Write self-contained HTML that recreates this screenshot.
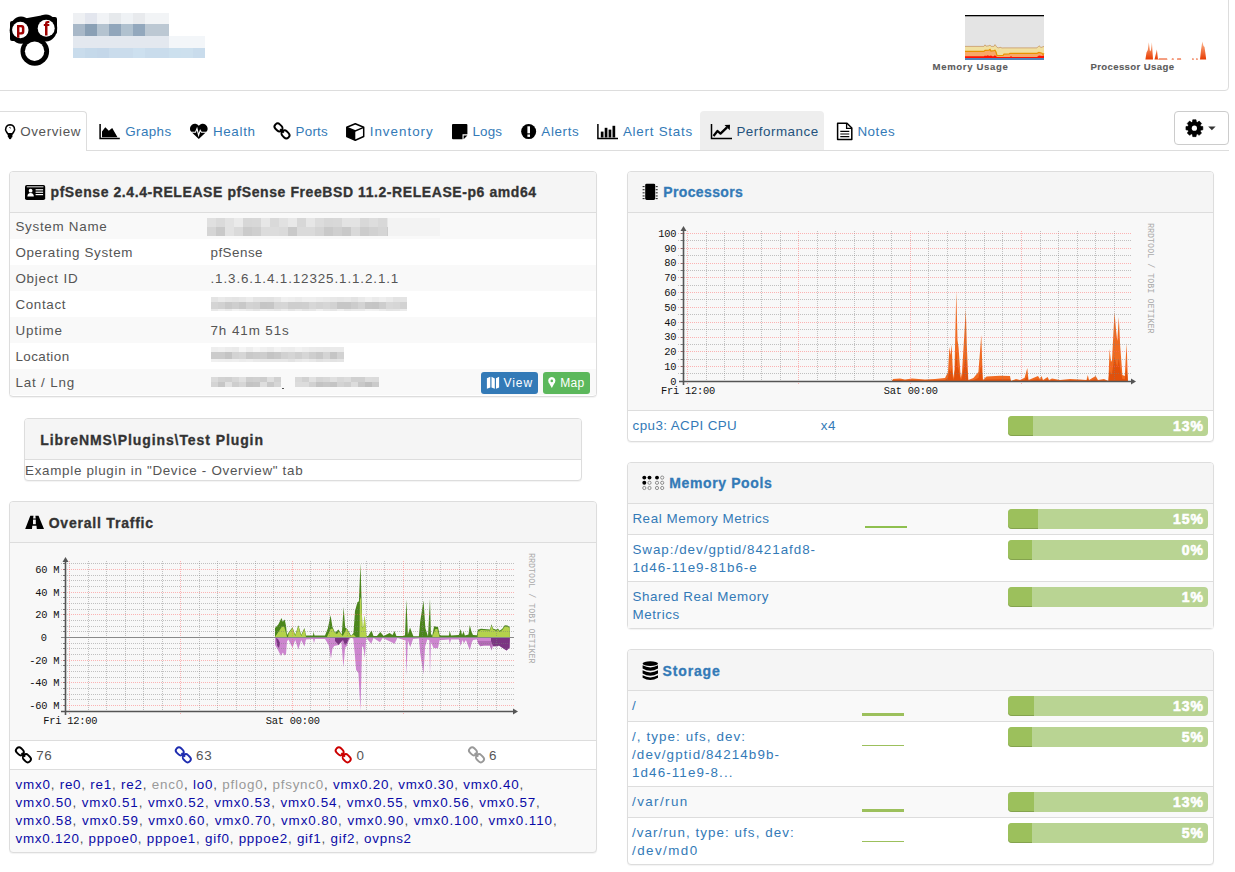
<!DOCTYPE html>
<html><head><meta charset="utf-8"><title>LibreNMS pfSense device</title>
<style>
html,body{margin:0;padding:0;background:#fff;width:1235px;height:872px;overflow:hidden;position:relative;font-family:"Liberation Sans",sans-serif;}
</style></head><body>
<div style="position:absolute;left:-6px;top:-6px;width:1235px;height:97px;box-sizing:border-box;border:1px solid #dddddd;border-radius:4px;background:#fff;"></div>
<div style="position:absolute;left:932.60px;top:62.27px;white-space:pre;font-family:'Liberation Sans', sans-serif;font-size:9.6px;line-height:9.6px;font-weight:700;color:#5b5b5b;letter-spacing:0.632px;-webkit-text-stroke:0.1px #5b5b5b">Memory Usage</div>
<div style="position:absolute;left:1090.40px;top:62.27px;white-space:pre;font-family:'Liberation Sans', sans-serif;font-size:9.6px;line-height:9.6px;font-weight:700;color:#5b5b5b;letter-spacing:0.372px;-webkit-text-stroke:0.1px #5b5b5b">Processor Usage</div>
<div style="position:absolute;left:0px;top:150px;width:1229px;height:1px;background:#dddddd;"></div>
<div style="position:absolute;left:-6px;top:111px;width:93px;height:40px;box-sizing:border-box;border:1px solid #dddddd;border-bottom:none;border-radius:4px 4px 0 0;background:#fff;"></div>
<div style="position:absolute;left:700px;top:111px;width:124px;height:39px;background:#eeeeee;border-radius:4px 4px 0 0;"></div>
<div style="position:absolute;left:1174px;top:111px;width:55px;height:34px;box-sizing:border-box;border:1px solid #cccccc;border-radius:4px;background:#fff;"></div>
<div style="position:absolute;left:20.20px;top:125.26px;white-space:pre;font-family:'Liberation Sans', sans-serif;font-size:13.4px;line-height:13.4px;font-weight:400;color:#555;letter-spacing:0.641px">Overview</div>
<div style="position:absolute;left:125.20px;top:125.26px;white-space:pre;font-family:'Liberation Sans', sans-serif;font-size:13.4px;line-height:13.4px;font-weight:400;color:#337ab7;letter-spacing:0.416px">Graphs</div>
<div style="position:absolute;left:212.90px;top:125.26px;white-space:pre;font-family:'Liberation Sans', sans-serif;font-size:13.4px;line-height:13.4px;font-weight:400;color:#337ab7;letter-spacing:0.676px">Health</div>
<div style="position:absolute;left:295.50px;top:125.26px;white-space:pre;font-family:'Liberation Sans', sans-serif;font-size:13.4px;line-height:13.4px;font-weight:400;color:#337ab7;letter-spacing:0.259px">Ports</div>
<div style="position:absolute;left:369.70px;top:125.26px;white-space:pre;font-family:'Liberation Sans', sans-serif;font-size:13.4px;line-height:13.4px;font-weight:400;color:#337ab7;letter-spacing:1.001px">Inventory</div>
<div style="position:absolute;left:472.50px;top:125.26px;white-space:pre;font-family:'Liberation Sans', sans-serif;font-size:13.4px;line-height:13.4px;font-weight:400;color:#337ab7;letter-spacing:0.151px">Logs</div>
<div style="position:absolute;left:541.30px;top:125.26px;white-space:pre;font-family:'Liberation Sans', sans-serif;font-size:13.4px;line-height:13.4px;font-weight:400;color:#337ab7;letter-spacing:0.653px">Alerts</div>
<div style="position:absolute;left:622.90px;top:125.26px;white-space:pre;font-family:'Liberation Sans', sans-serif;font-size:13.4px;line-height:13.4px;font-weight:400;color:#337ab7;letter-spacing:0.752px">Alert Stats</div>
<div style="position:absolute;left:736.40px;top:125.26px;white-space:pre;font-family:'Liberation Sans', sans-serif;font-size:13.4px;line-height:13.4px;font-weight:400;color:#23527c;letter-spacing:0.514px">Performance</div>
<div style="position:absolute;left:857.40px;top:125.26px;white-space:pre;font-family:'Liberation Sans', sans-serif;font-size:13.4px;line-height:13.4px;font-weight:400;color:#337ab7;letter-spacing:0.554px">Notes</div>
<div style="position:absolute;left:9px;top:171px;width:588px;height:226px;box-sizing:border-box;border:1px solid #dddddd;border-radius:4px;background:#fff;box-shadow:0 1px 1px rgba(0,0,0,.05);"></div>
<div style="position:absolute;left:10px;top:172px;width:586px;height:40px;background:#f5f5f5;border-radius:3px 3px 0 0;"></div>
<div style="position:absolute;left:10px;top:212px;width:586px;height:1px;background:#dddddd;"></div>
<div style="position:absolute;left:10px;top:213px;width:586px;height:26px;background:#f9f9f9;"></div>
<div style="position:absolute;left:10px;top:265px;width:586px;height:26px;background:#f9f9f9;"></div>
<div style="position:absolute;left:10px;top:317px;width:586px;height:26px;background:#f9f9f9;"></div>
<div style="position:absolute;left:10px;top:369px;width:586px;height:26px;background:#f9f9f9;"></div>
<div style="position:absolute;left:50.50px;top:184.95px;white-space:pre;font-family:'Liberation Sans', sans-serif;font-size:14px;line-height:14px;font-weight:700;color:#333333;letter-spacing:0.579px;-webkit-text-stroke:0.3px #333333">pfSense 2.4.4-RELEASE pfSense FreeBSD 11.2-RELEASE-p6 amd64</div>
<div style="position:absolute;left:15.40px;top:220.06px;white-space:pre;font-family:'Liberation Sans', sans-serif;font-size:13.4px;line-height:13.4px;font-weight:400;color:#555555;letter-spacing:0.731px">System Name</div>
<div style="position:absolute;left:15.40px;top:246.06px;white-space:pre;font-family:'Liberation Sans', sans-serif;font-size:13.4px;line-height:13.4px;font-weight:400;color:#555555;letter-spacing:0.655px">Operating System</div>
<div style="position:absolute;left:15.40px;top:272.06px;white-space:pre;font-family:'Liberation Sans', sans-serif;font-size:13.4px;line-height:13.4px;font-weight:400;color:#555555;letter-spacing:0.798px">Object ID</div>
<div style="position:absolute;left:15.40px;top:298.06px;white-space:pre;font-family:'Liberation Sans', sans-serif;font-size:13.4px;line-height:13.4px;font-weight:400;color:#555555;letter-spacing:0.657px">Contact</div>
<div style="position:absolute;left:15.40px;top:324.06px;white-space:pre;font-family:'Liberation Sans', sans-serif;font-size:13.4px;line-height:13.4px;font-weight:400;color:#555555;letter-spacing:0.836px">Uptime</div>
<div style="position:absolute;left:15.40px;top:350.06px;white-space:pre;font-family:'Liberation Sans', sans-serif;font-size:13.4px;line-height:13.4px;font-weight:400;color:#555555;letter-spacing:0.437px">Location</div>
<div style="position:absolute;left:15.40px;top:376.06px;white-space:pre;font-family:'Liberation Sans', sans-serif;font-size:13.4px;line-height:13.4px;font-weight:400;color:#555555;letter-spacing:0.834px">Lat / Lng</div>
<div style="position:absolute;left:210.50px;top:246.06px;white-space:pre;font-family:'Liberation Sans', sans-serif;font-size:13.4px;line-height:13.4px;font-weight:400;color:#555555;letter-spacing:0.477px">pfSense</div>
<div style="position:absolute;left:210.50px;top:272.06px;white-space:pre;font-family:'Liberation Sans', sans-serif;font-size:13.4px;line-height:13.4px;font-weight:400;color:#555555;letter-spacing:0.888px">.1.3.6.1.4.1.12325.1.1.2.1.1</div>
<div style="position:absolute;left:210.50px;top:324.06px;white-space:pre;font-family:'Liberation Sans', sans-serif;font-size:13.4px;line-height:13.4px;font-weight:400;color:#555555;letter-spacing:0.924px">7h 41m 51s</div>
<div style="position:absolute;left:481px;top:372px;width:57px;height:22px;background:#337ab7;border-radius:3px;"></div>
<div style="position:absolute;left:543px;top:372px;width:47px;height:22px;background:#5cb85c;border-radius:3px;"></div>
<div style="position:absolute;left:503.40px;top:376.74px;white-space:pre;font-family:'Liberation Sans', sans-serif;font-size:12px;line-height:12px;font-weight:400;color:#fff;letter-spacing:1.001px">View</div>
<div style="position:absolute;left:560.30px;top:376.74px;white-space:pre;font-family:'Liberation Sans', sans-serif;font-size:12px;line-height:12px;font-weight:400;color:#fff;letter-spacing:0.278px">Map</div>
<div style="position:absolute;left:24px;top:418px;width:558px;height:63px;box-sizing:border-box;border:1px solid #dddddd;border-radius:4px;background:#fff;box-shadow:0 1px 1px rgba(0,0,0,.05);"></div>
<div style="position:absolute;left:25px;top:419px;width:556px;height:40px;background:#f5f5f5;border-radius:3px 3px 0 0;"></div>
<div style="position:absolute;left:25px;top:459px;width:556px;height:1px;background:#dddddd;"></div>
<div style="position:absolute;left:40.20px;top:432.75px;white-space:pre;font-family:'Liberation Sans', sans-serif;font-size:14px;line-height:14px;font-weight:700;color:#333333;letter-spacing:0.915px;-webkit-text-stroke:0.3px #333333">LibreNMS\Plugins\Test Plugin</div>
<div style="position:absolute;left:25.10px;top:463.76px;white-space:pre;font-family:'Liberation Sans', sans-serif;font-size:13.4px;line-height:13.4px;font-weight:400;color:#555555;letter-spacing:0.690px">Example plugin in "Device - Overview" tab</div>
<div style="position:absolute;left:9px;top:501px;width:588px;height:352px;box-sizing:border-box;border:1px solid #dddddd;border-radius:4px;background:#f9f9f9;box-shadow:0 1px 1px rgba(0,0,0,.05);"></div>
<div style="position:absolute;left:10px;top:502px;width:586px;height:40px;background:#f5f5f5;border-radius:3px 3px 0 0;"></div>
<div style="position:absolute;left:10px;top:542px;width:586px;height:1px;background:#dddddd;"></div>
<div style="position:absolute;left:10px;top:543px;width:586px;height:197px;background:#f8f8f8;"></div>
<div style="position:absolute;left:10px;top:740px;width:586px;height:1px;background:#dddddd;"></div>
<div style="position:absolute;left:10px;top:741px;width:586px;height:28px;background:#fff;"></div>
<div style="position:absolute;left:10px;top:769px;width:586px;height:1px;background:#dddddd;"></div>
<div style="position:absolute;left:48.70px;top:515.65px;white-space:pre;font-family:'Liberation Sans', sans-serif;font-size:14px;line-height:14px;font-weight:700;color:#333333;letter-spacing:0.786px;-webkit-text-stroke:0.3px #333333">Overall Traffic</div>
<div style="position:absolute;left:36.30px;top:748.76px;white-space:pre;font-family:'Liberation Sans', sans-serif;font-size:13.4px;line-height:13.4px;font-weight:400;color:#555555;letter-spacing:0.600px">76</div>
<div style="position:absolute;left:196.10px;top:748.76px;white-space:pre;font-family:'Liberation Sans', sans-serif;font-size:13.4px;line-height:13.4px;font-weight:400;color:#555555;letter-spacing:0.750px">63</div>
<div style="position:absolute;left:356.50px;top:748.76px;white-space:pre;font-family:'Liberation Sans', sans-serif;font-size:13.4px;line-height:13.4px;font-weight:400;color:#555555;letter-spacing:0.750px">0</div>
<div style="position:absolute;left:489.10px;top:748.76px;white-space:pre;font-family:'Liberation Sans', sans-serif;font-size:13.4px;line-height:13.4px;font-weight:400;color:#555555;letter-spacing:0.750px">6</div>
<div style="position:absolute;left:15.50px;top:778.06px;white-space:pre;font-family:'Liberation Sans', sans-serif;font-size:13.4px;line-height:13.4px;font-weight:400;color:#555555;letter-spacing:0.783px"><span style="color:#0a0aa6">vmx0</span><span style="color:#555">, </span><span style="color:#0a0aa6">re0</span><span style="color:#555">, </span><span style="color:#0a0aa6">re1</span><span style="color:#555">, </span><span style="color:#0a0aa6">re2</span><span style="color:#555">, </span><span style="color:#999999">enc0</span><span style="color:#555">, </span><span style="color:#0a0aa6">lo0</span><span style="color:#555">, </span><span style="color:#999999">pflog0</span><span style="color:#555">, </span><span style="color:#999999">pfsync0</span><span style="color:#555">, </span><span style="color:#0a0aa6">vmx0.20</span><span style="color:#555">, </span><span style="color:#0a0aa6">vmx0.30</span><span style="color:#555">, </span><span style="color:#0a0aa6">vmx0.40</span><span style="color:#555">, </span></div>
<div style="position:absolute;left:15.50px;top:796.06px;white-space:pre;font-family:'Liberation Sans', sans-serif;font-size:13.4px;line-height:13.4px;font-weight:400;color:#555555;letter-spacing:0.907px"><span style="color:#0a0aa6">vmx0.50</span><span style="color:#555">, </span><span style="color:#0a0aa6">vmx0.51</span><span style="color:#555">, </span><span style="color:#0a0aa6">vmx0.52</span><span style="color:#555">, </span><span style="color:#0a0aa6">vmx0.53</span><span style="color:#555">, </span><span style="color:#0a0aa6">vmx0.54</span><span style="color:#555">, </span><span style="color:#0a0aa6">vmx0.55</span><span style="color:#555">, </span><span style="color:#0a0aa6">vmx0.56</span><span style="color:#555">, </span><span style="color:#0a0aa6">vmx0.57</span><span style="color:#555">, </span></div>
<div style="position:absolute;left:15.50px;top:813.86px;white-space:pre;font-family:'Liberation Sans', sans-serif;font-size:13.4px;line-height:13.4px;font-weight:400;color:#555555;letter-spacing:0.923px"><span style="color:#0a0aa6">vmx0.58</span><span style="color:#555">, </span><span style="color:#0a0aa6">vmx0.59</span><span style="color:#555">, </span><span style="color:#0a0aa6">vmx0.60</span><span style="color:#555">, </span><span style="color:#0a0aa6">vmx0.70</span><span style="color:#555">, </span><span style="color:#0a0aa6">vmx0.80</span><span style="color:#555">, </span><span style="color:#0a0aa6">vmx0.90</span><span style="color:#555">, </span><span style="color:#0a0aa6">vmx0.100</span><span style="color:#555">, </span><span style="color:#0a0aa6">vmx0.110</span><span style="color:#555">, </span></div>
<div style="position:absolute;left:15.50px;top:831.66px;white-space:pre;font-family:'Liberation Sans', sans-serif;font-size:13.4px;line-height:13.4px;font-weight:400;color:#555555;letter-spacing:0.759px"><span style="color:#0a0aa6">vmx0.120</span><span style="color:#555">, </span><span style="color:#0a0aa6">pppoe0</span><span style="color:#555">, </span><span style="color:#0a0aa6">pppoe1</span><span style="color:#555">, </span><span style="color:#0a0aa6">gif0</span><span style="color:#555">, </span><span style="color:#0a0aa6">pppoe2</span><span style="color:#555">, </span><span style="color:#0a0aa6">gif1</span><span style="color:#555">, </span><span style="color:#0a0aa6">gif2</span><span style="color:#555">, </span><span style="color:#0a0aa6">ovpns2</span></div>
<div style="position:absolute;left:627px;top:171px;width:587px;height:271px;box-sizing:border-box;border:1px solid #dddddd;border-radius:4px;background:#fff;box-shadow:0 1px 1px rgba(0,0,0,.05);"></div>
<div style="position:absolute;left:628px;top:172px;width:585px;height:40px;background:#f5f5f5;border-radius:3px 3px 0 0;"></div>
<div style="position:absolute;left:628px;top:212px;width:585px;height:1px;background:#dddddd;"></div>
<div style="position:absolute;left:628px;top:213px;width:585px;height:197px;background:#f8f8f8;"></div>
<div style="position:absolute;left:628px;top:410px;width:585px;height:1px;background:#dddddd;"></div>
<div style="position:absolute;left:663.20px;top:185.15px;white-space:pre;font-family:'Liberation Sans', sans-serif;font-size:14px;line-height:14px;font-weight:700;color:#337ab7;letter-spacing:0.380px;-webkit-text-stroke:0.3px #337ab7">Processors</div>
<div style="position:absolute;left:632.60px;top:418.66px;white-space:pre;font-family:'Liberation Sans', sans-serif;font-size:13.4px;line-height:13.4px;font-weight:400;color:#337ab7;letter-spacing:0.401px">cpu3: ACPI CPU</div>
<div style="position:absolute;left:820.70px;top:418.66px;white-space:pre;font-family:'Liberation Sans', sans-serif;font-size:13.4px;line-height:13.4px;font-weight:400;color:#337ab7;letter-spacing:0.600px">x4</div>
<div style="position:absolute;left:1008px;top:416px;width:200px;height:20px;background:#b9d493;border-radius:4px;overflow:hidden;"></div>
<div style="position:absolute;left:1008px;top:416px;width:25px;height:20px;background:#9cc05c;border-radius:4px 0 0 4px;box-shadow:inset 0 -1px 0 rgba(0,0,0,.15);"></div>
<div style="position:absolute;left:1172.97px;top:418.55px;white-space:pre;font-family:'Liberation Sans', sans-serif;font-size:14px;line-height:14px;font-weight:700;color:#fff;letter-spacing:1.000px;-webkit-text-stroke:0.6px #fff">13%</div>
<div style="position:absolute;left:627px;top:462px;width:587px;height:167px;box-sizing:border-box;border:1px solid #dddddd;border-radius:4px;background:#fff;box-shadow:0 1px 1px rgba(0,0,0,.05);"></div>
<div style="position:absolute;left:628px;top:463px;width:585px;height:40px;background:#f5f5f5;border-radius:3px 3px 0 0;"></div>
<div style="position:absolute;left:628px;top:503px;width:585px;height:1px;background:#dddddd;"></div>
<div style="position:absolute;left:628px;top:504px;width:585px;height:30px;background:#f9f9f9;"></div>
<div style="position:absolute;left:628px;top:534px;width:585px;height:1px;background:#dddddd;"></div>
<div style="position:absolute;left:628px;top:581px;width:585px;height:1px;background:#dddddd;"></div>
<div style="position:absolute;left:628px;top:582px;width:585px;height:46px;background:#f9f9f9;"></div>
<div style="position:absolute;left:669.20px;top:476.45px;white-space:pre;font-family:'Liberation Sans', sans-serif;font-size:14px;line-height:14px;font-weight:700;color:#337ab7;letter-spacing:0.627px;-webkit-text-stroke:0.3px #337ab7">Memory Pools</div>
<div style="position:absolute;left:632.40px;top:511.96px;white-space:pre;font-family:'Liberation Sans', sans-serif;font-size:13.4px;line-height:13.4px;font-weight:400;color:#337ab7;letter-spacing:0.561px">Real Memory Metrics</div>
<div style="position:absolute;left:632.40px;top:542.96px;white-space:pre;font-family:'Liberation Sans', sans-serif;font-size:13.4px;line-height:13.4px;font-weight:400;color:#337ab7;letter-spacing:0.974px">Swap:/dev/gptid/8421afd8-</div>
<div style="position:absolute;left:632.40px;top:561.46px;white-space:pre;font-family:'Liberation Sans', sans-serif;font-size:13.4px;line-height:13.4px;font-weight:400;color:#337ab7;letter-spacing:1.013px">1d46-11e9-81b6-e</div>
<div style="position:absolute;left:632.40px;top:589.66px;white-space:pre;font-family:'Liberation Sans', sans-serif;font-size:13.4px;line-height:13.4px;font-weight:400;color:#337ab7;letter-spacing:0.563px">Shared Real Memory</div>
<div style="position:absolute;left:632.40px;top:607.66px;white-space:pre;font-family:'Liberation Sans', sans-serif;font-size:13.4px;line-height:13.4px;font-weight:400;color:#337ab7;letter-spacing:0.624px">Metrics</div>
<div style="position:absolute;left:1008px;top:509px;width:200px;height:20px;background:#b9d493;border-radius:4px;overflow:hidden;"></div>
<div style="position:absolute;left:1008px;top:509px;width:30px;height:20px;background:#9cc05c;border-radius:4px 0 0 4px;box-shadow:inset 0 -1px 0 rgba(0,0,0,.15);"></div>
<div style="position:absolute;left:1172.97px;top:511.55px;white-space:pre;font-family:'Liberation Sans', sans-serif;font-size:14px;line-height:14px;font-weight:700;color:#fff;letter-spacing:1.000px;-webkit-text-stroke:0.6px #fff">15%</div>
<div style="position:absolute;left:1008px;top:540px;width:200px;height:20px;background:#b9d493;border-radius:4px;overflow:hidden;"></div>
<div style="position:absolute;left:1008px;top:540px;width:24px;height:20px;background:#9cc05c;border-radius:4px 0 0 4px;box-shadow:inset 0 -1px 0 rgba(0,0,0,.15);"></div>
<div style="position:absolute;left:1181.77px;top:542.55px;white-space:pre;font-family:'Liberation Sans', sans-serif;font-size:14px;line-height:14px;font-weight:700;color:#fff;letter-spacing:1.000px;-webkit-text-stroke:0.6px #fff">0%</div>
<div style="position:absolute;left:1008px;top:587px;width:200px;height:20px;background:#b9d493;border-radius:4px;overflow:hidden;"></div>
<div style="position:absolute;left:1008px;top:587px;width:24px;height:20px;background:#9cc05c;border-radius:4px 0 0 4px;box-shadow:inset 0 -1px 0 rgba(0,0,0,.15);"></div>
<div style="position:absolute;left:1181.77px;top:589.55px;white-space:pre;font-family:'Liberation Sans', sans-serif;font-size:14px;line-height:14px;font-weight:700;color:#fff;letter-spacing:1.000px;-webkit-text-stroke:0.6px #fff">1%</div>
<div style="position:absolute;left:865px;top:526px;width:42px;height:2px;background:#8fc04f;"></div>
<div style="position:absolute;left:627px;top:649px;width:587px;height:216px;box-sizing:border-box;border:1px solid #dddddd;border-radius:4px;background:#fff;box-shadow:0 1px 1px rgba(0,0,0,.05);"></div>
<div style="position:absolute;left:628px;top:650px;width:585px;height:40px;background:#f5f5f5;border-radius:3px 3px 0 0;"></div>
<div style="position:absolute;left:628px;top:690px;width:585px;height:1px;background:#dddddd;"></div>
<div style="position:absolute;left:628px;top:691px;width:585px;height:30px;background:#f9f9f9;"></div>
<div style="position:absolute;left:628px;top:721px;width:585px;height:1px;background:#dddddd;"></div>
<div style="position:absolute;left:628px;top:786px;width:585px;height:1px;background:#dddddd;"></div>
<div style="position:absolute;left:628px;top:787px;width:585px;height:30px;background:#f9f9f9;"></div>
<div style="position:absolute;left:628px;top:817px;width:585px;height:1px;background:#dddddd;"></div>
<div style="position:absolute;left:662.60px;top:663.55px;white-space:pre;font-family:'Liberation Sans', sans-serif;font-size:14px;line-height:14px;font-weight:700;color:#337ab7;letter-spacing:0.846px;-webkit-text-stroke:0.3px #337ab7">Storage</div>
<div style="position:absolute;left:632.00px;top:699.16px;white-space:pre;font-family:'Liberation Sans', sans-serif;font-size:13.4px;line-height:13.4px;font-weight:400;color:#337ab7;letter-spacing:0.750px">/</div>
<div style="position:absolute;left:632.00px;top:729.66px;white-space:pre;font-family:'Liberation Sans', sans-serif;font-size:13.4px;line-height:13.4px;font-weight:400;color:#337ab7;letter-spacing:1.086px">/, type: ufs, dev:</div>
<div style="position:absolute;left:632.00px;top:748.06px;white-space:pre;font-family:'Liberation Sans', sans-serif;font-size:13.4px;line-height:13.4px;font-weight:400;color:#337ab7;letter-spacing:1.114px">/dev/gptid/84214b9b-</div>
<div style="position:absolute;left:632.00px;top:766.06px;white-space:pre;font-family:'Liberation Sans', sans-serif;font-size:13.4px;line-height:13.4px;font-weight:400;color:#337ab7;letter-spacing:1.106px">1d46-11e9-8...</div>
<div style="position:absolute;left:632.00px;top:794.86px;white-space:pre;font-family:'Liberation Sans', sans-serif;font-size:13.4px;line-height:13.4px;font-weight:400;color:#337ab7;letter-spacing:1.413px">/var/run</div>
<div style="position:absolute;left:632.00px;top:826.16px;white-space:pre;font-family:'Liberation Sans', sans-serif;font-size:13.4px;line-height:13.4px;font-weight:400;color:#337ab7;letter-spacing:1.062px">/var/run, type: ufs, dev:</div>
<div style="position:absolute;left:632.00px;top:843.76px;white-space:pre;font-family:'Liberation Sans', sans-serif;font-size:13.4px;line-height:13.4px;font-weight:400;color:#337ab7;letter-spacing:1.429px">/dev/md0</div>
<div style="position:absolute;left:1008px;top:696px;width:200px;height:20px;background:#b9d493;border-radius:4px;overflow:hidden;"></div>
<div style="position:absolute;left:1008px;top:696px;width:26px;height:20px;background:#9cc05c;border-radius:4px 0 0 4px;box-shadow:inset 0 -1px 0 rgba(0,0,0,.15);"></div>
<div style="position:absolute;left:1172.97px;top:698.55px;white-space:pre;font-family:'Liberation Sans', sans-serif;font-size:14px;line-height:14px;font-weight:700;color:#fff;letter-spacing:1.000px;-webkit-text-stroke:0.6px #fff">13%</div>
<div style="position:absolute;left:1008px;top:727px;width:200px;height:20px;background:#b9d493;border-radius:4px;overflow:hidden;"></div>
<div style="position:absolute;left:1008px;top:727px;width:24px;height:20px;background:#9cc05c;border-radius:4px 0 0 4px;box-shadow:inset 0 -1px 0 rgba(0,0,0,.15);"></div>
<div style="position:absolute;left:1181.77px;top:729.55px;white-space:pre;font-family:'Liberation Sans', sans-serif;font-size:14px;line-height:14px;font-weight:700;color:#fff;letter-spacing:1.000px;-webkit-text-stroke:0.6px #fff">5%</div>
<div style="position:absolute;left:1008px;top:792px;width:200px;height:20px;background:#b9d493;border-radius:4px;overflow:hidden;"></div>
<div style="position:absolute;left:1008px;top:792px;width:26px;height:20px;background:#9cc05c;border-radius:4px 0 0 4px;box-shadow:inset 0 -1px 0 rgba(0,0,0,.15);"></div>
<div style="position:absolute;left:1172.97px;top:794.55px;white-space:pre;font-family:'Liberation Sans', sans-serif;font-size:14px;line-height:14px;font-weight:700;color:#fff;letter-spacing:1.000px;-webkit-text-stroke:0.6px #fff">13%</div>
<div style="position:absolute;left:1008px;top:823px;width:200px;height:20px;background:#b9d493;border-radius:4px;overflow:hidden;"></div>
<div style="position:absolute;left:1008px;top:823px;width:24px;height:20px;background:#9cc05c;border-radius:4px 0 0 4px;box-shadow:inset 0 -1px 0 rgba(0,0,0,.15);"></div>
<div style="position:absolute;left:1181.77px;top:825.55px;white-space:pre;font-family:'Liberation Sans', sans-serif;font-size:14px;line-height:14px;font-weight:700;color:#fff;letter-spacing:1.000px;-webkit-text-stroke:0.6px #fff">5%</div>
<div style="position:absolute;left:862px;top:713px;width:42px;height:3px;background:#9cc05c;"></div>
<div style="position:absolute;left:862px;top:745px;width:42px;height:1px;background:#9cc05c;"></div>
<div style="position:absolute;left:862px;top:809px;width:42px;height:3px;background:#9cc05c;"></div>
<div style="position:absolute;left:862px;top:841px;width:42px;height:1px;background:#9cc05c;"></div>
<svg style="position:absolute;left:0;top:0" width="1235" height="872" shape-rendering="crispEdges"><line x1="681" y1="381.5" x2="684" y2="381.5" stroke="#777"/><line x1="681" y1="366.5" x2="684" y2="366.5" stroke="#777"/><line x1="681" y1="351.5" x2="684" y2="351.5" stroke="#777"/><line x1="681" y1="337.5" x2="684" y2="337.5" stroke="#777"/><line x1="681" y1="322.5" x2="684" y2="322.5" stroke="#777"/><line x1="681" y1="307.5" x2="684" y2="307.5" stroke="#777"/><line x1="681" y1="292.5" x2="684" y2="292.5" stroke="#777"/><line x1="681" y1="277.5" x2="684" y2="277.5" stroke="#777"/><line x1="681" y1="263.5" x2="684" y2="263.5" stroke="#777"/><line x1="681" y1="248.5" x2="684" y2="248.5" stroke="#777"/><line x1="681" y1="233.5" x2="684" y2="233.5" stroke="#777"/><line x1="681" y1="373.5" x2="684" y2="373.5" stroke="#777"/><line x1="681" y1="359.5" x2="684" y2="359.5" stroke="#777"/><line x1="681" y1="344.5" x2="684" y2="344.5" stroke="#777"/><line x1="681" y1="329.5" x2="684" y2="329.5" stroke="#777"/><line x1="681" y1="314.5" x2="684" y2="314.5" stroke="#777"/><line x1="681" y1="299.5" x2="684" y2="299.5" stroke="#777"/><line x1="681" y1="285.5" x2="684" y2="285.5" stroke="#777"/><line x1="681" y1="270.5" x2="684" y2="270.5" stroke="#777"/><line x1="681" y1="255.5" x2="684" y2="255.5" stroke="#777"/><line x1="681" y1="240.5" x2="684" y2="240.5" stroke="#777"/><polygon points="892.0,381.0 892.0,381.0 893.0,379.0 900.0,378.5 905.0,379.5 912.0,378.5 925.0,379.5 935.0,379.0 945.0,378.0 948.0,372.0 949.4,347.0 950.5,355.0 951.6,344.4 953.2,378.0 954.5,370.0 956.3,291.0 957.5,340.0 958.5,347.0 960.8,378.0 962.0,372.0 964.3,335.0 965.8,309.0 966.8,345.0 968.3,380.0 973.4,378.0 978.4,372.0 981.3,335.0 982.8,380.0 986.6,376.5 1000.0,375.8 1010.0,375.9 1011.0,381.0 1016.0,379.0 1020.0,380.0 1024.6,377.7 1027.3,368.0 1028.5,380.0 1038.0,376.0 1040.0,379.0 1041.6,376.0 1043.0,380.0 1047.7,377.0 1049.0,380.0 1052.0,378.5 1060.0,380.0 1070.0,379.0 1080.0,379.5 1086.5,380.0 1087.8,375.0 1089.0,380.0 1095.7,376.0 1098.0,380.0 1104.0,379.0 1108.4,381.0 1109.6,349.0 1111.0,362.0 1112.0,360.0 1114.5,312.0 1116.0,330.0 1117.3,341.0 1118.8,317.0 1120.2,346.0 1122.4,375.0 1124.8,376.0 1126.6,343.0 1127.9,381.0 1127.9,381.0" fill="#f06a20" shape-rendering="auto" /><polygon points="892.0,381.0 892.0,381.0 893.0,380.3 900.0,380.1 905.0,380.5 912.0,380.1 925.0,380.5 935.0,380.3 945.0,379.9 948.0,377.9 949.4,369.1 950.5,371.9 951.6,368.2 953.2,379.9 954.5,377.1 956.3,349.5 957.5,366.6 958.5,369.1 960.8,379.9 962.0,377.9 964.3,364.9 965.8,355.8 966.8,368.4 968.3,380.6 973.4,379.9 978.4,377.9 981.3,364.9 982.8,380.6 986.6,379.4 1000.0,379.2 1010.0,379.2 1011.0,381.0 1016.0,380.3 1020.0,380.6 1024.6,379.8 1027.3,376.4 1028.5,380.6 1038.0,379.2 1040.0,380.3 1041.6,379.2 1043.0,380.6 1047.7,379.6 1049.0,380.6 1052.0,380.1 1060.0,380.6 1070.0,380.3 1080.0,380.5 1086.5,380.6 1087.8,378.9 1089.0,380.6 1095.7,379.2 1098.0,380.6 1104.0,380.3 1108.4,381.0 1109.6,369.8 1111.0,374.4 1112.0,373.6 1114.5,356.9 1116.0,363.1 1117.3,367.0 1118.8,358.6 1120.2,368.8 1122.4,378.9 1124.8,379.2 1126.6,367.7 1127.9,381.0 1127.9,381.0" fill="#e2500a" shape-rendering="auto" /><line x1="678" y1="373.5" x2="1132" y2="373.5" stroke="rgba(125,125,125,.45)" stroke-dasharray="1 1"/><line x1="678" y1="359.5" x2="1132" y2="359.5" stroke="rgba(125,125,125,.45)" stroke-dasharray="1 1"/><line x1="678" y1="344.5" x2="1132" y2="344.5" stroke="rgba(125,125,125,.45)" stroke-dasharray="1 1"/><line x1="678" y1="329.5" x2="1132" y2="329.5" stroke="rgba(125,125,125,.45)" stroke-dasharray="1 1"/><line x1="678" y1="314.5" x2="1132" y2="314.5" stroke="rgba(125,125,125,.45)" stroke-dasharray="1 1"/><line x1="678" y1="299.5" x2="1132" y2="299.5" stroke="rgba(125,125,125,.45)" stroke-dasharray="1 1"/><line x1="678" y1="285.5" x2="1132" y2="285.5" stroke="rgba(125,125,125,.45)" stroke-dasharray="1 1"/><line x1="678" y1="270.5" x2="1132" y2="270.5" stroke="rgba(125,125,125,.45)" stroke-dasharray="1 1"/><line x1="678" y1="255.5" x2="1132" y2="255.5" stroke="rgba(125,125,125,.45)" stroke-dasharray="1 1"/><line x1="678" y1="240.5" x2="1132" y2="240.5" stroke="rgba(125,125,125,.45)" stroke-dasharray="1 1"/><line x1="706.5" y1="231" x2="706.5" y2="381" stroke="rgba(125,125,125,.45)" stroke-dasharray="1 1"/><line x1="724.5" y1="231" x2="724.5" y2="381" stroke="rgba(125,125,125,.45)" stroke-dasharray="1 1"/><line x1="743.5" y1="231" x2="743.5" y2="381" stroke="rgba(125,125,125,.45)" stroke-dasharray="1 1"/><line x1="761.5" y1="231" x2="761.5" y2="381" stroke="rgba(125,125,125,.45)" stroke-dasharray="1 1"/><line x1="780.5" y1="231" x2="780.5" y2="381" stroke="rgba(125,125,125,.45)" stroke-dasharray="1 1"/><line x1="817.5" y1="231" x2="817.5" y2="381" stroke="rgba(125,125,125,.45)" stroke-dasharray="1 1"/><line x1="835.5" y1="231" x2="835.5" y2="381" stroke="rgba(125,125,125,.45)" stroke-dasharray="1 1"/><line x1="854.5" y1="231" x2="854.5" y2="381" stroke="rgba(125,125,125,.45)" stroke-dasharray="1 1"/><line x1="873.5" y1="231" x2="873.5" y2="381" stroke="rgba(125,125,125,.45)" stroke-dasharray="1 1"/><line x1="891.5" y1="231" x2="891.5" y2="381" stroke="rgba(125,125,125,.45)" stroke-dasharray="1 1"/><line x1="928.5" y1="231" x2="928.5" y2="381" stroke="rgba(125,125,125,.45)" stroke-dasharray="1 1"/><line x1="947.5" y1="231" x2="947.5" y2="381" stroke="rgba(125,125,125,.45)" stroke-dasharray="1 1"/><line x1="965.5" y1="231" x2="965.5" y2="381" stroke="rgba(125,125,125,.45)" stroke-dasharray="1 1"/><line x1="984.5" y1="231" x2="984.5" y2="381" stroke="rgba(125,125,125,.45)" stroke-dasharray="1 1"/><line x1="1002.5" y1="231" x2="1002.5" y2="381" stroke="rgba(125,125,125,.45)" stroke-dasharray="1 1"/><line x1="1040.5" y1="231" x2="1040.5" y2="381" stroke="rgba(125,125,125,.45)" stroke-dasharray="1 1"/><line x1="1058.5" y1="231" x2="1058.5" y2="381" stroke="rgba(125,125,125,.45)" stroke-dasharray="1 1"/><line x1="1077.5" y1="231" x2="1077.5" y2="381" stroke="rgba(125,125,125,.45)" stroke-dasharray="1 1"/><line x1="1095.5" y1="231" x2="1095.5" y2="381" stroke="rgba(125,125,125,.45)" stroke-dasharray="1 1"/><line x1="1114.5" y1="231" x2="1114.5" y2="381" stroke="rgba(125,125,125,.45)" stroke-dasharray="1 1"/><line x1="678" y1="366.5" x2="1132" y2="366.5" stroke="rgba(255,95,95,.45)" stroke-dasharray="1 1"/><line x1="678" y1="351.5" x2="1132" y2="351.5" stroke="rgba(255,95,95,.45)" stroke-dasharray="1 1"/><line x1="678" y1="337.5" x2="1132" y2="337.5" stroke="rgba(255,95,95,.45)" stroke-dasharray="1 1"/><line x1="678" y1="322.5" x2="1132" y2="322.5" stroke="rgba(255,95,95,.45)" stroke-dasharray="1 1"/><line x1="678" y1="307.5" x2="1132" y2="307.5" stroke="rgba(255,95,95,.45)" stroke-dasharray="1 1"/><line x1="678" y1="292.5" x2="1132" y2="292.5" stroke="rgba(255,95,95,.45)" stroke-dasharray="1 1"/><line x1="678" y1="277.5" x2="1132" y2="277.5" stroke="rgba(255,95,95,.45)" stroke-dasharray="1 1"/><line x1="678" y1="263.5" x2="1132" y2="263.5" stroke="rgba(255,95,95,.45)" stroke-dasharray="1 1"/><line x1="678" y1="248.5" x2="1132" y2="248.5" stroke="rgba(255,95,95,.45)" stroke-dasharray="1 1"/><line x1="678" y1="233.5" x2="1132" y2="233.5" stroke="rgba(255,95,95,.45)" stroke-dasharray="1 1"/><line x1="687.5" y1="231" x2="687.5" y2="384" stroke="rgba(255,95,95,.45)" stroke-dasharray="1 1"/><line x1="798.5" y1="231" x2="798.5" y2="384" stroke="rgba(255,95,95,.45)" stroke-dasharray="1 1"/><line x1="910.5" y1="231" x2="910.5" y2="384" stroke="rgba(255,95,95,.45)" stroke-dasharray="1 1"/><line x1="1021.5" y1="231" x2="1021.5" y2="384" stroke="rgba(255,95,95,.45)" stroke-dasharray="1 1"/><line x1="683.5" y1="230" x2="683.5" y2="385" stroke="#555" stroke-width="1.6" shape-rendering="auto"/><polygon points="680.5,231 683.5,226 686.5,231" fill="#555" shape-rendering="auto"/><line x1="679" y1="381.5" x2="1132" y2="381.5" stroke="#555" stroke-width="1.6" shape-rendering="auto"/><polygon points="1131,378.5 1136,381.5 1131,384.5" fill="#555" shape-rendering="auto"/></svg>
<div style="position:absolute;left:670.25px;top:376.83px;white-space:pre;font-family:'Liberation Mono', monospace;font-size:10.4px;line-height:10.4px;font-weight:400;color:#111;letter-spacing:-0.250px">0</div>
<div style="position:absolute;left:664.27px;top:362.03px;white-space:pre;font-family:'Liberation Mono', monospace;font-size:10.4px;line-height:10.4px;font-weight:400;color:#111;letter-spacing:-0.250px">10</div>
<div style="position:absolute;left:664.27px;top:347.23px;white-space:pre;font-family:'Liberation Mono', monospace;font-size:10.4px;line-height:10.4px;font-weight:400;color:#111;letter-spacing:-0.250px">20</div>
<div style="position:absolute;left:664.27px;top:332.43px;white-space:pre;font-family:'Liberation Mono', monospace;font-size:10.4px;line-height:10.4px;font-weight:400;color:#111;letter-spacing:-0.250px">30</div>
<div style="position:absolute;left:664.27px;top:317.63px;white-space:pre;font-family:'Liberation Mono', monospace;font-size:10.4px;line-height:10.4px;font-weight:400;color:#111;letter-spacing:-0.250px">40</div>
<div style="position:absolute;left:664.27px;top:302.83px;white-space:pre;font-family:'Liberation Mono', monospace;font-size:10.4px;line-height:10.4px;font-weight:400;color:#111;letter-spacing:-0.250px">50</div>
<div style="position:absolute;left:664.27px;top:288.03px;white-space:pre;font-family:'Liberation Mono', monospace;font-size:10.4px;line-height:10.4px;font-weight:400;color:#111;letter-spacing:-0.250px">60</div>
<div style="position:absolute;left:664.27px;top:273.23px;white-space:pre;font-family:'Liberation Mono', monospace;font-size:10.4px;line-height:10.4px;font-weight:400;color:#111;letter-spacing:-0.250px">70</div>
<div style="position:absolute;left:664.27px;top:258.43px;white-space:pre;font-family:'Liberation Mono', monospace;font-size:10.4px;line-height:10.4px;font-weight:400;color:#111;letter-spacing:-0.250px">80</div>
<div style="position:absolute;left:664.27px;top:243.63px;white-space:pre;font-family:'Liberation Mono', monospace;font-size:10.4px;line-height:10.4px;font-weight:400;color:#111;letter-spacing:-0.250px">90</div>
<div style="position:absolute;left:658.28px;top:228.83px;white-space:pre;font-family:'Liberation Mono', monospace;font-size:10.4px;line-height:10.4px;font-weight:400;color:#111;letter-spacing:-0.250px">100</div>
<div style="position:absolute;left:661.06px;top:386.13px;white-space:pre;font-family:'Liberation Mono', monospace;font-size:10.4px;line-height:10.4px;font-weight:400;color:#111;letter-spacing:-0.250px">Fri 12:00</div>
<div style="position:absolute;left:883.76px;top:386.13px;white-space:pre;font-family:'Liberation Mono', monospace;font-size:10.4px;line-height:10.4px;font-weight:400;color:#111;letter-spacing:-0.250px">Sat 00:00</div>
<div style="position:absolute;left:1145px;top:223px;width:10px;height:112px;overflow:visible"><div style="position:absolute;left:9px;top:0;transform-origin:0 0;transform:rotate(90deg);white-space:pre;font-family:'Liberation Mono',monospace;font-size:8.4px;line-height:9px;color:#aaa;">RRDTOOL / TOBI OETIKER</div></div>
<svg style="position:absolute;left:0;top:0" width="1235" height="872" shape-rendering="crispEdges"><line x1="63" y1="569.5" x2="66" y2="569.5" stroke="#777"/><line x1="63" y1="592.5" x2="66" y2="592.5" stroke="#777"/><line x1="63" y1="614.5" x2="66" y2="614.5" stroke="#777"/><line x1="63" y1="660.5" x2="66" y2="660.5" stroke="#777"/><line x1="63" y1="682.5" x2="66" y2="682.5" stroke="#777"/><line x1="63" y1="705.5" x2="66" y2="705.5" stroke="#777"/><line x1="63" y1="699.5" x2="66" y2="699.5" stroke="#777"/><line x1="63" y1="694.5" x2="66" y2="694.5" stroke="#777"/><line x1="63" y1="688.5" x2="66" y2="688.5" stroke="#777"/><line x1="63" y1="677.5" x2="66" y2="677.5" stroke="#777"/><line x1="63" y1="671.5" x2="66" y2="671.5" stroke="#777"/><line x1="63" y1="665.5" x2="66" y2="665.5" stroke="#777"/><line x1="63" y1="654.5" x2="66" y2="654.5" stroke="#777"/><line x1="63" y1="648.5" x2="66" y2="648.5" stroke="#777"/><line x1="63" y1="643.5" x2="66" y2="643.5" stroke="#777"/><line x1="63" y1="631.5" x2="66" y2="631.5" stroke="#777"/><line x1="63" y1="626.5" x2="66" y2="626.5" stroke="#777"/><line x1="63" y1="620.5" x2="66" y2="620.5" stroke="#777"/><line x1="63" y1="609.5" x2="66" y2="609.5" stroke="#777"/><line x1="63" y1="603.5" x2="66" y2="603.5" stroke="#777"/><line x1="63" y1="597.5" x2="66" y2="597.5" stroke="#777"/><line x1="63" y1="586.5" x2="66" y2="586.5" stroke="#777"/><line x1="63" y1="580.5" x2="66" y2="580.5" stroke="#777"/><line x1="63" y1="575.5" x2="66" y2="575.5" stroke="#777"/><line x1="63" y1="563.5" x2="66" y2="563.5" stroke="#777"/><line x1="61" y1="637.5" x2="514" y2="637.5" stroke="#888"/><polygon points="275.0,637.0 275.0,628.0 278.3,624.4 281.5,618.0 282.8,621.7 284.7,619.4 286.0,625.8 287.0,635.0 288.8,632.2 292.5,627.2 295.2,635.0 298.4,625.3 301.2,635.0 304.4,628.0 306.0,635.5 313.0,635.4 313.6,631.7 314.5,635.4 325.0,635.4 327.8,628.5 330.6,615.2 332.4,626.7 335.1,632.7 338.4,629.6 341.8,634.4 343.6,607.1 345.2,627.6 347.2,629.0 349.6,633.0 351.1,635.9 353.5,633.0 355.0,611.0 357.4,602.3 358.9,601.3 360.5,563.3 362.3,627.1 364.2,627.1 364.7,615.4 365.5,627.0 366.2,636.0 368.1,636.0 371.5,630.5 373.5,636.0 376.9,636.0 380.3,632.0 383.7,636.0 389.6,633.0 392.5,635.0 394.5,631.0 396.4,636.0 403.2,636.0 405.0,635.3 406.4,599.4 407.9,634.7 410.0,627.6 411.5,631.5 413.4,636.3 418.9,636.3 420.2,621.4 423.5,600.4 425.4,628.2 428.0,636.3 430.0,598.4 430.9,633.4 432.2,636.0 434.1,626.3 438.0,626.9 439.6,634.7 441.3,635.5 449.0,635.5 449.7,630.8 451.0,635.5 458.8,635.0 460.7,628.9 462.0,635.0 463.6,631.5 464.9,635.5 468.5,634.4 469.8,625.0 471.4,631.5 473.0,635.0 476.9,635.3 477.9,629.8 481.0,628.7 490.0,629.4 491.5,624.3 493.0,628.4 496.2,629.8 497.9,628.4 499.6,630.8 502.3,628.7 504.8,625.3 507.5,625.6 509.6,627.0 509.9,637.0" fill="#4b861c" shape-rendering="auto" /><path d="M275.0,637.0 L276.4,635.0 L281.9,626.7 L284.2,626.7 L286.5,635.0 L287.0,637.0Z M288.0,637.0 L288.8,633.0 L292.5,628.0 L295.2,636.0 L298.4,626.3 L301.2,636.0 L304.4,629.0 L306.0,637.0Z M327.0,637.0 L330.6,629.0 L332.4,628.5 L335.0,633.0 L337.0,634.0 L338.9,631.5 L342.8,636.0 L346.7,628.6 L350.6,636.0 L353.5,634.4 L356.0,637.0Z M359.5,637.0 L359.9,599.8 L360.8,597.0 L362.8,629.0 L364.7,615.4 L366.7,636.0 L367.0,637.0Z M432.2,637.0 L435.4,628.9 L437.4,628.9 L439.3,636.0 L439.5,637.0Z M477.5,637.0 L478.2,631.5 L481.0,630.0 L490.0,630.5 L491.5,625.5 L493.0,629.5 L496.2,631.0 L497.9,629.5 L499.6,632.0 L502.3,630.0 L504.8,626.5 L507.5,626.8 L509.6,628.0 L509.9,637.0Z" fill="#b4d24c" shape-rendering="auto"/><polygon points="275.0,637.0 275.0,645.0 277.3,648.7 281.0,656.0 282.8,652.4 284.7,655.6 286.0,654.2 287.0,641.4 288.3,639.5 292.5,647.8 295.2,640.0 298.4,649.6 301.2,640.0 304.4,646.4 306.0,639.5 313.0,639.0 314.0,643.2 315.0,639.0 325.0,639.0 328.7,645.0 331.0,658.8 332.4,648.7 334.2,646.0 338.7,645.0 341.4,641.4 343.4,667.6 345.1,647.8 346.9,646.0 348.8,640.5 351.0,637.5 353.3,638.7 354.7,653.3 356.1,669.9 358.4,673.0 360.5,711.1 362.1,646.0 363.4,647.8 364.8,657.9 366.2,638.0 371.2,643.7 373.5,638.0 380.0,642.3 382.7,638.0 390.0,641.4 394.6,643.7 397.4,638.0 405.6,640.5 406.4,675.5 407.9,640.2 410.2,647.3 411.5,643.4 413.1,638.9 418.9,638.5 420.2,653.1 423.5,674.5 425.1,646.7 427.3,639.5 429.3,640.2 430.0,675.8 430.9,642.1 433.5,648.0 438.0,648.3 439.6,640.2 449.0,639.5 449.7,644.1 451.0,639.5 458.8,639.5 460.7,646.0 462.6,640.0 463.9,643.4 465.9,640.0 469.8,650.2 471.7,642.8 473.0,640.0 476.9,639.4 477.9,643.5 480.3,646.3 483.8,645.6 490.0,645.6 491.5,650.4 493.0,646.3 497.5,646.3 498.9,645.6 502.3,647.7 506.5,650.4 509.6,647.7 509.9,637.0" fill="#cd86cf" shape-rendering="auto" /><polygon points="477.5,641.0 480.3,646.3 483.8,645.6 490.0,645.6 491.5,650.4 491.5,641.0" fill="#b36ab6" shape-rendering="auto" /><path d="M335.0,638.0 L335.0,641.0 L338.7,645.0 L341.4,641.4 L343.0,640.0 L345.0,645.0 L347.0,643.0 L349.0,638.0Z M276.0,638.0 L277.3,646.0 L279.0,648.0 L280.0,643.0 L278.0,639.0Z M491.0,638.0 L491.0,641.0 L493.0,646.3 L497.5,646.3 L498.9,645.6 L502.3,647.7 L506.5,650.4 L509.6,647.7 L509.9,638.0Z" fill="#7b3582" shape-rendering="auto"/><line x1="61" y1="699.5" x2="514" y2="699.5" stroke="rgba(125,125,125,.45)" stroke-dasharray="1 1"/><line x1="61" y1="694.5" x2="514" y2="694.5" stroke="rgba(125,125,125,.45)" stroke-dasharray="1 1"/><line x1="61" y1="688.5" x2="514" y2="688.5" stroke="rgba(125,125,125,.45)" stroke-dasharray="1 1"/><line x1="61" y1="677.5" x2="514" y2="677.5" stroke="rgba(125,125,125,.45)" stroke-dasharray="1 1"/><line x1="61" y1="671.5" x2="514" y2="671.5" stroke="rgba(125,125,125,.45)" stroke-dasharray="1 1"/><line x1="61" y1="665.5" x2="514" y2="665.5" stroke="rgba(125,125,125,.45)" stroke-dasharray="1 1"/><line x1="61" y1="654.5" x2="514" y2="654.5" stroke="rgba(125,125,125,.45)" stroke-dasharray="1 1"/><line x1="61" y1="648.5" x2="514" y2="648.5" stroke="rgba(125,125,125,.45)" stroke-dasharray="1 1"/><line x1="61" y1="643.5" x2="514" y2="643.5" stroke="rgba(125,125,125,.45)" stroke-dasharray="1 1"/><line x1="61" y1="631.5" x2="514" y2="631.5" stroke="rgba(125,125,125,.45)" stroke-dasharray="1 1"/><line x1="61" y1="626.5" x2="514" y2="626.5" stroke="rgba(125,125,125,.45)" stroke-dasharray="1 1"/><line x1="61" y1="620.5" x2="514" y2="620.5" stroke="rgba(125,125,125,.45)" stroke-dasharray="1 1"/><line x1="61" y1="609.5" x2="514" y2="609.5" stroke="rgba(125,125,125,.45)" stroke-dasharray="1 1"/><line x1="61" y1="603.5" x2="514" y2="603.5" stroke="rgba(125,125,125,.45)" stroke-dasharray="1 1"/><line x1="61" y1="597.5" x2="514" y2="597.5" stroke="rgba(125,125,125,.45)" stroke-dasharray="1 1"/><line x1="61" y1="586.5" x2="514" y2="586.5" stroke="rgba(125,125,125,.45)" stroke-dasharray="1 1"/><line x1="61" y1="580.5" x2="514" y2="580.5" stroke="rgba(125,125,125,.45)" stroke-dasharray="1 1"/><line x1="61" y1="575.5" x2="514" y2="575.5" stroke="rgba(125,125,125,.45)" stroke-dasharray="1 1"/><line x1="61" y1="563.5" x2="514" y2="563.5" stroke="rgba(125,125,125,.45)" stroke-dasharray="1 1"/><line x1="88.5" y1="561" x2="88.5" y2="711" stroke="rgba(125,125,125,.45)" stroke-dasharray="1 1"/><line x1="106.5" y1="561" x2="106.5" y2="711" stroke="rgba(125,125,125,.45)" stroke-dasharray="1 1"/><line x1="125.5" y1="561" x2="125.5" y2="711" stroke="rgba(125,125,125,.45)" stroke-dasharray="1 1"/><line x1="143.5" y1="561" x2="143.5" y2="711" stroke="rgba(125,125,125,.45)" stroke-dasharray="1 1"/><line x1="162.5" y1="561" x2="162.5" y2="711" stroke="rgba(125,125,125,.45)" stroke-dasharray="1 1"/><line x1="199.5" y1="561" x2="199.5" y2="711" stroke="rgba(125,125,125,.45)" stroke-dasharray="1 1"/><line x1="217.5" y1="561" x2="217.5" y2="711" stroke="rgba(125,125,125,.45)" stroke-dasharray="1 1"/><line x1="236.5" y1="561" x2="236.5" y2="711" stroke="rgba(125,125,125,.45)" stroke-dasharray="1 1"/><line x1="255.5" y1="561" x2="255.5" y2="711" stroke="rgba(125,125,125,.45)" stroke-dasharray="1 1"/><line x1="273.5" y1="561" x2="273.5" y2="711" stroke="rgba(125,125,125,.45)" stroke-dasharray="1 1"/><line x1="310.5" y1="561" x2="310.5" y2="711" stroke="rgba(125,125,125,.45)" stroke-dasharray="1 1"/><line x1="329.5" y1="561" x2="329.5" y2="711" stroke="rgba(125,125,125,.45)" stroke-dasharray="1 1"/><line x1="347.5" y1="561" x2="347.5" y2="711" stroke="rgba(125,125,125,.45)" stroke-dasharray="1 1"/><line x1="366.5" y1="561" x2="366.5" y2="711" stroke="rgba(125,125,125,.45)" stroke-dasharray="1 1"/><line x1="384.5" y1="561" x2="384.5" y2="711" stroke="rgba(125,125,125,.45)" stroke-dasharray="1 1"/><line x1="422.5" y1="561" x2="422.5" y2="711" stroke="rgba(125,125,125,.45)" stroke-dasharray="1 1"/><line x1="440.5" y1="561" x2="440.5" y2="711" stroke="rgba(125,125,125,.45)" stroke-dasharray="1 1"/><line x1="459.5" y1="561" x2="459.5" y2="711" stroke="rgba(125,125,125,.45)" stroke-dasharray="1 1"/><line x1="477.5" y1="561" x2="477.5" y2="711" stroke="rgba(125,125,125,.45)" stroke-dasharray="1 1"/><line x1="496.5" y1="561" x2="496.5" y2="711" stroke="rgba(125,125,125,.45)" stroke-dasharray="1 1"/><line x1="61" y1="569.5" x2="514" y2="569.5" stroke="rgba(255,95,95,.45)" stroke-dasharray="1 1"/><line x1="61" y1="592.5" x2="514" y2="592.5" stroke="rgba(255,95,95,.45)" stroke-dasharray="1 1"/><line x1="61" y1="614.5" x2="514" y2="614.5" stroke="rgba(255,95,95,.45)" stroke-dasharray="1 1"/><line x1="61" y1="660.5" x2="514" y2="660.5" stroke="rgba(255,95,95,.45)" stroke-dasharray="1 1"/><line x1="61" y1="682.5" x2="514" y2="682.5" stroke="rgba(255,95,95,.45)" stroke-dasharray="1 1"/><line x1="61" y1="705.5" x2="514" y2="705.5" stroke="rgba(255,95,95,.45)" stroke-dasharray="1 1"/><line x1="69.5" y1="561" x2="69.5" y2="714" stroke="rgba(255,95,95,.45)" stroke-dasharray="1 1"/><line x1="180.5" y1="561" x2="180.5" y2="714" stroke="rgba(255,95,95,.45)" stroke-dasharray="1 1"/><line x1="292.5" y1="561" x2="292.5" y2="714" stroke="rgba(255,95,95,.45)" stroke-dasharray="1 1"/><line x1="403.5" y1="561" x2="403.5" y2="714" stroke="rgba(255,95,95,.45)" stroke-dasharray="1 1"/><line x1="61" y1="637.5" x2="514" y2="637.5" stroke="#888"/><line x1="65.5" y1="561" x2="65.5" y2="715" stroke="#555" stroke-width="1.6" shape-rendering="auto"/><polygon points="62.5,562 65.5,557 68.5,562" fill="#555" shape-rendering="auto"/><line x1="61" y1="711.5" x2="514" y2="711.5" stroke="#555" stroke-width="1.6" shape-rendering="auto"/><polygon points="513,708.5 518,711.5 513,714.5" fill="#555" shape-rendering="auto"/></svg>
<div style="position:absolute;left:35.30px;top:564.93px;white-space:pre;font-family:'Liberation Mono', monospace;font-size:10.4px;line-height:10.4px;font-weight:400;color:#111;letter-spacing:-0.250px">60 M</div>
<div style="position:absolute;left:35.30px;top:587.60px;white-space:pre;font-family:'Liberation Mono', monospace;font-size:10.4px;line-height:10.4px;font-weight:400;color:#111;letter-spacing:-0.250px">40 M</div>
<div style="position:absolute;left:35.30px;top:610.26px;white-space:pre;font-family:'Liberation Mono', monospace;font-size:10.4px;line-height:10.4px;font-weight:400;color:#111;letter-spacing:-0.250px">20 M</div>
<div style="position:absolute;left:40.75px;top:632.93px;white-space:pre;font-family:'Liberation Mono', monospace;font-size:10.4px;line-height:10.4px;font-weight:400;color:#111;letter-spacing:-0.250px">0</div>
<div style="position:absolute;left:29.31px;top:655.59px;white-space:pre;font-family:'Liberation Mono', monospace;font-size:10.4px;line-height:10.4px;font-weight:400;color:#111;letter-spacing:-0.250px">-20 M</div>
<div style="position:absolute;left:29.31px;top:678.26px;white-space:pre;font-family:'Liberation Mono', monospace;font-size:10.4px;line-height:10.4px;font-weight:400;color:#111;letter-spacing:-0.250px">-40 M</div>
<div style="position:absolute;left:29.31px;top:700.93px;white-space:pre;font-family:'Liberation Mono', monospace;font-size:10.4px;line-height:10.4px;font-weight:400;color:#111;letter-spacing:-0.250px">-60 M</div>
<div style="position:absolute;left:43.26px;top:716.23px;white-space:pre;font-family:'Liberation Mono', monospace;font-size:10.4px;line-height:10.4px;font-weight:400;color:#111;letter-spacing:-0.250px">Fri 12:00</div>
<div style="position:absolute;left:265.76px;top:716.23px;white-space:pre;font-family:'Liberation Mono', monospace;font-size:10.4px;line-height:10.4px;font-weight:400;color:#111;letter-spacing:-0.250px">Sat 00:00</div>
<div style="position:absolute;left:526px;top:553px;width:10px;height:112px;overflow:visible"><div style="position:absolute;left:9px;top:0;transform-origin:0 0;transform:rotate(90deg);white-space:pre;font-family:'Liberation Mono',monospace;font-size:8.4px;line-height:9px;color:#aaa;">RRDTOOL / TOBI OETIKER</div></div>
<svg style="position:absolute;left:0;top:0" width="1235" height="872"><path d="M10.1,124.7 a4.5,4.5 0 0 1 3.5,7.3 l-1.3,1.9 h-4.4 l-1.3,-1.9 a4.5,4.5 0 0 1 3.5,-7.3z" fill="none" stroke="#000" stroke-width="1.6"/><rect x="7.8" y="133.4" width="4.6" height="4.4" rx="1.3" fill="#000"/><circle cx="10.1" cy="137.9" r="1.3" fill="#000"/><path d="M9.3,127.3 l1.6,0.9" stroke="#000" stroke-width="0.9"/><path d="M100.1,124 V138.6 H119.8" fill="none" stroke="#000" stroke-width="1.5"/><polygon points="102,137.3 102,131.5 105.3,127.2 108.8,130.8 112.2,128 117.5,137.3" fill="#000"/><path d="M198.8,139.1 L190.9,131.6 A4.3,4.3 0 0 1 198.8,125.8 A4.3,4.3 0 0 1 206.7,131.6 Z" fill="#000"/><polyline points="189.5,132.3 195.5,132.3 197,128.6 198.6,135.2 200.2,130.3 201.4,132.3 208,132.3" fill="none" stroke="#fff" stroke-width="1.1"/><g transform="translate(282,130.9) rotate(45) scale(1.0)" fill="none" stroke="#000" stroke-width="1.9"><rect x="-9.2" y="-3.1" width="8.6" height="6.2" rx="3"/><rect x="0.6" y="-3.1" width="8.6" height="6.2" rx="3"/><line x1="-2.5" y1="0" x2="2.5" y2="0"/></g><polygon points="346.8,127.3 355.3,131 355.3,140.3 346.8,136.5" fill="#000"/><polygon points="355.3,123.8 363.7,127.3 363.7,136.5 355.3,140.2 346.8,136.5 346.8,127.3" fill="none" stroke="#000" stroke-width="1.5" stroke-linejoin="round"/><polyline points="346.8,127.3 355.3,131 363.7,127.3" fill="none" stroke="#000" stroke-width="1.4"/><path d="M452,125 a1,1 0 0 1 1,-1 h13.4 a1,1 0 0 1 1,1 v9.3 h-4.9 v4.9 h-9.5 a1,1 0 0 1 -1,-1z" fill="#000"/><path d="M463.6,135.4 h3.8 l-3.8,3.8z" fill="#000"/><circle cx="528.65" cy="131.6" r="7.5" fill="#000"/><rect x="527.4" y="126.3" width="2.6" height="7" fill="#fff"/><rect x="527.4" y="134.5" width="2.6" height="2.4" fill="#fff"/><path d="M597.9,124 V138.6 H618" fill="none" stroke="#000" stroke-width="1.5"/><rect x="600.8" y="131.6" width="2.7" height="5.9" fill="#000"/><rect x="604.7" y="127.8" width="2.7" height="9.7" fill="#000"/><rect x="608.6" y="129.6" width="2.7" height="7.9" fill="#000"/><rect x="612.5" y="125.8" width="2.7" height="11.7" fill="#000"/><path d="M711.5,124 V138.6 H732" fill="none" stroke="#000" stroke-width="1.5"/><polyline points="713.5,136 717.5,131 720.5,133.6 727,127.3" fill="none" stroke="#000" stroke-width="2.3" stroke-linejoin="round"/><polygon points="724.5,125 730,124.8 729.8,130.2" fill="#000"/><path d="M837.6,123.2 h9.4 l4.8,4.8 v11.6 h-14.2z" fill="none" stroke="#000" stroke-width="1.5" stroke-linejoin="round"/><path d="M846.6,123.2 v5.2 h5.2" fill="none" stroke="#000" stroke-width="1.3"/><path d="M840.3,131.3 h9 M840.3,134 h9 M840.3,136.7 h9" stroke="#000" stroke-width="1.2"/><polygon points="1202.84,126.56 1202.84,129.84 1200.36,130.25 1200.06,130.96 1201.53,133.01 1199.21,135.33 1197.16,133.86 1196.45,134.16 1196.04,136.64 1192.76,136.64 1192.35,134.16 1191.64,133.86 1189.59,135.33 1187.27,133.01 1188.74,130.96 1188.44,130.25 1185.96,129.84 1185.96,126.56 1188.44,126.15 1188.74,125.44 1187.27,123.39 1189.59,121.07 1191.64,122.54 1192.35,122.24 1192.76,119.76 1196.04,119.76 1196.45,122.24 1197.16,122.54 1199.21,121.07 1201.53,123.39 1200.06,125.44 1200.36,126.15" fill="#000" stroke="#000" stroke-width="0.6" stroke-linejoin="round"/><circle cx="1194.4" cy="128.2" r="6.5" fill="#000"/><circle cx="1194.4" cy="128.2" r="2.6" fill="#fff"/><polygon points="1208.2,126.4 1215.6,126.4 1211.9,130.2" fill="#333"/><rect x="25" y="185" width="20.2" height="15" rx="1.8" fill="#000"/><rect x="26.8" y="186.4" width="16.6" height="0.9" fill="#fff"/><circle cx="30.6" cy="190.7" r="1.9" fill="#fff"/><path d="M27.4,196.5 q0,-3.6 3.2,-3.6 q3.2,0 3.2,3.6z" fill="#fff"/><rect x="35.6" y="189.2" width="7.5" height="1.2" fill="#fff"/><rect x="35.6" y="191.6" width="7.5" height="1.2" fill="#fff"/><rect x="35.6" y="194.0" width="7.5" height="1.2" fill="#fff"/><rect x="645.2" y="183.7" width="10" height="16.3" rx="1.4" fill="#000"/><rect x="642.6" y="186.2" width="2" height="0.9" fill="#000"/><rect x="655.7" y="186.2" width="2" height="0.9" fill="#000"/><rect x="642.6" y="189.3" width="2" height="0.9" fill="#000"/><rect x="655.7" y="189.3" width="2" height="0.9" fill="#000"/><rect x="642.6" y="192.4" width="2" height="0.9" fill="#000"/><rect x="655.7" y="192.4" width="2" height="0.9" fill="#000"/><rect x="642.6" y="195.5" width="2" height="0.9" fill="#000"/><rect x="655.7" y="195.5" width="2" height="0.9" fill="#000"/><rect x="642.6" y="198.2" width="2" height="0.9" fill="#000"/><rect x="655.7" y="198.2" width="2" height="0.9" fill="#000"/><circle cx="644.3" cy="477.6" r="1.95" fill="#000"/><circle cx="649.5" cy="477.6" r="1.95" fill="#000"/><circle cx="644.3" cy="482.8" r="1.95" fill="#000"/><circle cx="649.5" cy="482.8" r="1.6" fill="none" stroke="#777" stroke-width="0.8"/><circle cx="644.3" cy="488.0" r="1.6" fill="none" stroke="#777" stroke-width="0.8"/><circle cx="649.5" cy="488.0" r="1.6" fill="none" stroke="#777" stroke-width="0.8"/><circle cx="657.0" cy="477.6" r="1.95" fill="#000"/><circle cx="662.2" cy="477.6" r="1.6" fill="none" stroke="#777" stroke-width="0.8"/><circle cx="657.0" cy="482.8" r="1.6" fill="none" stroke="#777" stroke-width="0.8"/><circle cx="662.2" cy="482.8" r="1.6" fill="none" stroke="#777" stroke-width="0.8"/><circle cx="657.0" cy="488.0" r="1.6" fill="none" stroke="#777" stroke-width="0.8"/><circle cx="662.2" cy="488.0" r="1.6" fill="none" stroke="#777" stroke-width="0.8"/><ellipse cx="650.3" cy="663.6" rx="7.7" ry="2.4" fill="#000"/><path d="M642.6,665.3 v3.2 q7.7,4.6 15.4,0 v-3.2 q-7.7,4.2 -15.4,0z" fill="#000"/><path d="M642.6,670.3 v3.2 q7.7,4.6 15.4,0 v-3.2 q-7.7,4.2 -15.4,0z" fill="#000"/><path d="M642.6,675.3 v2.4 q7.7,4.6 15.4,0 v-2.4 q-7.7,4.2 -15.4,0z" fill="#000"/><polygon points="30.3,515.8 33.5,515.8 33.1,518.4 35.7,518.4 35.4,515.8 38.5,515.8 44,528.9 36.8,528.9 36.5,525.7 32.3,525.7 32,528.9 25.2,528.9" fill="#000"/><rect x="33" y="519.6" width="2.8" height="4.6" fill="#f5f5f5"/><path d="M486.9,378.3 l3.4,-1.5 v10.8 l-3.4,1.2z M491.5,376.8 l3.3,1.6 v10.4 l-3.3,-1.3z M496,378.3 l3.1,-1.5 v10.6 l-3.1,1.4z" fill="#fff"/><path d="M551.8,387.9 l-3.2,-5.6 a3.6,3.6 0 1 1 6.4,0z" fill="#fff"/><circle cx="551.8" cy="380.9" r="1.3" fill="#5cb85c"/><g transform="translate(23.4,754.8) rotate(45) scale(1.0)" fill="none" stroke="#000" stroke-width="1.9"><rect x="-9.2" y="-3.1" width="8.6" height="6.2" rx="3"/><rect x="0.6" y="-3.1" width="8.6" height="6.2" rx="3"/><line x1="-2.5" y1="0" x2="2.5" y2="0"/></g><g transform="translate(183.3,754.8) rotate(45) scale(1.0)" fill="none" stroke="#1f2db0" stroke-width="1.9"><rect x="-9.2" y="-3.1" width="8.6" height="6.2" rx="3"/><rect x="0.6" y="-3.1" width="8.6" height="6.2" rx="3"/><line x1="-2.5" y1="0" x2="2.5" y2="0"/></g><g transform="translate(343.2,754.8) rotate(45) scale(1.0)" fill="none" stroke="#cc0000" stroke-width="1.9"><rect x="-9.2" y="-3.1" width="8.6" height="6.2" rx="3"/><rect x="0.6" y="-3.1" width="8.6" height="6.2" rx="3"/><line x1="-2.5" y1="0" x2="2.5" y2="0"/></g><g transform="translate(476.5,754.8) rotate(45) scale(1.0)" fill="none" stroke="#999" stroke-width="1.9"><rect x="-9.2" y="-3.1" width="8.6" height="6.2" rx="3"/><rect x="0.6" y="-3.1" width="8.6" height="6.2" rx="3"/><line x1="-2.5" y1="0" x2="2.5" y2="0"/></g></svg>
<svg style="position:absolute;left:0;top:0" width="80" height="80"><ellipse cx="21" cy="30.2" rx="11.3" ry="13.6" fill="#000"/><ellipse cx="46" cy="28" rx="11.2" ry="13.6" fill="#000"/><circle cx="34.8" cy="51.4" r="14.3" fill="#000"/><rect x="10" y="21" width="7" height="20" rx="2" fill="#000"/><rect x="50" y="17" width="7" height="17" rx="2" fill="#000"/><polygon points="13,38 22,19 44,15 55,32 46,41 26,45" fill="#000"/><circle cx="20.3" cy="30" r="8.2" fill="#fff"/><circle cx="46.2" cy="28.2" r="8.5" fill="#fff"/><circle cx="34.6" cy="51.2" r="9.7" fill="#fff"/><path d="M17,25 h4.8 a2.6,3 0 0 1 2.6,3 v3.6 a2.6,3 0 0 1 -2.6,3 h-2.4 v3.2 h-2.4z M19.4,27.3 v5 h1.6 a0.9,1 0 0 0 0.9,-1 v-3 a0.9,1 0 0 0 -0.9,-1z" fill="#a00000" fill-rule="evenodd"/><path d="M45,35.5 v-9.5 h-1.2 v-2 h1.2 v-0.6 a2.4,2.4 0 0 1 2.4,-2.4 h1.9 v2 h-1.2 a0.6,0.6 0 0 0 -0.6,0.6 v0.4 h1.8 v2 h-1.8 v9.5z" fill="#a00000"/></svg>
<div style="position:absolute;left:73px;top:13px;width:12px;height:11px;background:#eef0f3;"></div>
<div style="position:absolute;left:85px;top:13px;width:12px;height:11px;background:#e3e6ee;"></div>
<div style="position:absolute;left:97px;top:13px;width:12px;height:11px;background:#f1f3f6;"></div>
<div style="position:absolute;left:109px;top:13px;width:12px;height:11px;background:#e6e9ec;"></div>
<div style="position:absolute;left:121px;top:13px;width:12px;height:11px;background:#eff2f5;"></div>
<div style="position:absolute;left:133px;top:13px;width:12px;height:11px;background:#e8eaed;"></div>
<div style="position:absolute;left:145px;top:13px;width:12px;height:11px;background:#f2f4f6;"></div>
<div style="position:absolute;left:157px;top:13px;width:12px;height:11px;background:#f2f4f6;"></div>
<div style="position:absolute;left:73px;top:24px;width:12px;height:12px;background:#a8b8c8;"></div>
<div style="position:absolute;left:85px;top:24px;width:12px;height:12px;background:#8aa0b5;"></div>
<div style="position:absolute;left:97px;top:24px;width:12px;height:12px;background:#b4c3d0;"></div>
<div style="position:absolute;left:109px;top:24px;width:12px;height:12px;background:#91a6bb;"></div>
<div style="position:absolute;left:121px;top:24px;width:12px;height:12px;background:#b0c1cf;"></div>
<div style="position:absolute;left:133px;top:24px;width:12px;height:12px;background:#93a8bd;"></div>
<div style="position:absolute;left:145px;top:24px;width:12px;height:12px;background:#bcc8d3;"></div>
<div style="position:absolute;left:157px;top:24px;width:12px;height:12px;background:#bcc8d3;"></div>
<div style="position:absolute;left:73px;top:36px;width:12px;height:11.5px;background:#e3e8ef;"></div>
<div style="position:absolute;left:85px;top:36px;width:12px;height:11.5px;background:#e3e8ef;"></div>
<div style="position:absolute;left:97px;top:36px;width:12px;height:11.5px;background:#e3e8ef;"></div>
<div style="position:absolute;left:109px;top:36px;width:12px;height:11.5px;background:#e3e8ef;"></div>
<div style="position:absolute;left:121px;top:36px;width:12px;height:11.5px;background:#e3e8ef;"></div>
<div style="position:absolute;left:133px;top:36px;width:12px;height:11.5px;background:#e3e8ef;"></div>
<div style="position:absolute;left:145px;top:36px;width:12px;height:11.5px;background:#e3e8ef;"></div>
<div style="position:absolute;left:157px;top:36px;width:12px;height:11.5px;background:#e3e8ef;"></div>
<div style="position:absolute;left:169px;top:36px;width:12px;height:11.5px;background:#f3f6f9;"></div>
<div style="position:absolute;left:181px;top:36px;width:12px;height:11.5px;background:#f3f6f9;"></div>
<div style="position:absolute;left:193px;top:36px;width:12px;height:11.5px;background:#f3f6f9;"></div>
<div style="position:absolute;left:73px;top:47.5px;width:12px;height:10.5px;background:#c9dcec;"></div>
<div style="position:absolute;left:85px;top:47.5px;width:12px;height:10.5px;background:#c5d9ea;"></div>
<div style="position:absolute;left:97px;top:47.5px;width:12px;height:10.5px;background:#c4d7e9;"></div>
<div style="position:absolute;left:109px;top:47.5px;width:12px;height:10.5px;background:#cadcec;"></div>
<div style="position:absolute;left:121px;top:47.5px;width:12px;height:10.5px;background:#cadcec;"></div>
<div style="position:absolute;left:133px;top:47.5px;width:12px;height:10.5px;background:#cde0ef;"></div>
<div style="position:absolute;left:145px;top:47.5px;width:12px;height:10.5px;background:#c9dcec;"></div>
<div style="position:absolute;left:157px;top:47.5px;width:12px;height:10.5px;background:#c9dcec;"></div>
<div style="position:absolute;left:169px;top:47.5px;width:12px;height:10.5px;background:#cce0ee;"></div>
<div style="position:absolute;left:181px;top:47.5px;width:12px;height:10.5px;background:#cde0ee;"></div>
<div style="position:absolute;left:193px;top:47.5px;width:12px;height:10.5px;background:#c9dcec;"></div>
<div style="position:absolute;left:207px;top:218px;width:9px;height:9px;background:rgb(224,224,224);"></div>
<div style="position:absolute;left:216px;top:218px;width:9px;height:9px;background:rgb(218,218,218);"></div>
<div style="position:absolute;left:225px;top:218px;width:9px;height:9px;background:rgb(226,226,226);"></div>
<div style="position:absolute;left:234px;top:218px;width:9px;height:9px;background:rgb(234,234,234);"></div>
<div style="position:absolute;left:243px;top:218px;width:9px;height:9px;background:rgb(215,215,215);"></div>
<div style="position:absolute;left:252px;top:218px;width:9px;height:9px;background:rgb(216,216,216);"></div>
<div style="position:absolute;left:261px;top:218px;width:9px;height:9px;background:rgb(231,231,231);"></div>
<div style="position:absolute;left:270px;top:218px;width:9px;height:9px;background:rgb(217,217,217);"></div>
<div style="position:absolute;left:279px;top:218px;width:9px;height:9px;background:rgb(225,225,225);"></div>
<div style="position:absolute;left:288px;top:218px;width:9px;height:9px;background:rgb(232,232,232);"></div>
<div style="position:absolute;left:297px;top:218px;width:9px;height:9px;background:rgb(215,215,215);"></div>
<div style="position:absolute;left:306px;top:218px;width:9px;height:9px;background:rgb(230,230,230);"></div>
<div style="position:absolute;left:315px;top:218px;width:9px;height:9px;background:rgb(220,220,220);"></div>
<div style="position:absolute;left:324px;top:218px;width:9px;height:9px;background:rgb(215,215,215);"></div>
<div style="position:absolute;left:333px;top:218px;width:9px;height:9px;background:rgb(216,216,216);"></div>
<div style="position:absolute;left:342px;top:218px;width:9px;height:9px;background:rgb(227,227,227);"></div>
<div style="position:absolute;left:351px;top:218px;width:9px;height:9px;background:rgb(227,227,227);"></div>
<div style="position:absolute;left:360px;top:218px;width:9px;height:9px;background:rgb(216,216,216);"></div>
<div style="position:absolute;left:369px;top:218px;width:9px;height:9px;background:rgb(221,221,221);"></div>
<div style="position:absolute;left:378px;top:218px;width:9px;height:9px;background:rgb(216,216,216);"></div>
<div style="position:absolute;left:387px;top:218px;width:1px;height:9px;background:rgb(231,231,231);"></div>
<div style="position:absolute;left:207px;top:227px;width:9px;height:9px;background:rgb(213,213,213);"></div>
<div style="position:absolute;left:216px;top:227px;width:9px;height:9px;background:rgb(201,201,201);"></div>
<div style="position:absolute;left:225px;top:227px;width:9px;height:9px;background:rgb(226,226,226);"></div>
<div style="position:absolute;left:234px;top:227px;width:9px;height:9px;background:rgb(218,218,218);"></div>
<div style="position:absolute;left:243px;top:227px;width:9px;height:9px;background:rgb(203,203,203);"></div>
<div style="position:absolute;left:252px;top:227px;width:9px;height:9px;background:rgb(207,207,207);"></div>
<div style="position:absolute;left:261px;top:227px;width:9px;height:9px;background:rgb(220,220,220);"></div>
<div style="position:absolute;left:270px;top:227px;width:9px;height:9px;background:rgb(220,220,220);"></div>
<div style="position:absolute;left:279px;top:227px;width:9px;height:9px;background:rgb(218,218,218);"></div>
<div style="position:absolute;left:288px;top:227px;width:9px;height:9px;background:rgb(201,201,201);"></div>
<div style="position:absolute;left:297px;top:227px;width:9px;height:9px;background:rgb(218,218,218);"></div>
<div style="position:absolute;left:306px;top:227px;width:9px;height:9px;background:rgb(218,218,218);"></div>
<div style="position:absolute;left:315px;top:227px;width:9px;height:9px;background:rgb(212,212,212);"></div>
<div style="position:absolute;left:324px;top:227px;width:9px;height:9px;background:rgb(201,201,201);"></div>
<div style="position:absolute;left:333px;top:227px;width:9px;height:9px;background:rgb(207,207,207);"></div>
<div style="position:absolute;left:342px;top:227px;width:9px;height:9px;background:rgb(201,201,201);"></div>
<div style="position:absolute;left:351px;top:227px;width:9px;height:9px;background:rgb(217,217,217);"></div>
<div style="position:absolute;left:360px;top:227px;width:9px;height:9px;background:rgb(204,204,204);"></div>
<div style="position:absolute;left:369px;top:227px;width:9px;height:9px;background:rgb(209,209,209);"></div>
<div style="position:absolute;left:378px;top:227px;width:9px;height:9px;background:rgb(213,213,213);"></div>
<div style="position:absolute;left:387px;top:227px;width:1px;height:9px;background:rgb(204,204,204);"></div>
<div style="position:absolute;left:388px;top:218px;width:52px;height:18px;background:#f3f3f3;"></div>
<div style="position:absolute;left:211px;top:297px;width:7px;height:5px;background:rgb(228,228,228);"></div>
<div style="position:absolute;left:218px;top:297px;width:7px;height:5px;background:rgb(234,234,234);"></div>
<div style="position:absolute;left:225px;top:297px;width:7px;height:5px;background:rgb(230,230,230);"></div>
<div style="position:absolute;left:232px;top:297px;width:7px;height:5px;background:rgb(228,228,228);"></div>
<div style="position:absolute;left:239px;top:297px;width:7px;height:5px;background:rgb(231,231,231);"></div>
<div style="position:absolute;left:246px;top:297px;width:7px;height:5px;background:rgb(236,236,236);"></div>
<div style="position:absolute;left:253px;top:297px;width:7px;height:5px;background:rgb(228,228,228);"></div>
<div style="position:absolute;left:260px;top:297px;width:7px;height:5px;background:rgb(227,227,227);"></div>
<div style="position:absolute;left:267px;top:297px;width:7px;height:5px;background:rgb(226,226,226);"></div>
<div style="position:absolute;left:274px;top:297px;width:7px;height:5px;background:rgb(231,231,231);"></div>
<div style="position:absolute;left:281px;top:297px;width:7px;height:5px;background:rgb(240,240,240);"></div>
<div style="position:absolute;left:288px;top:297px;width:7px;height:5px;background:rgb(238,238,238);"></div>
<div style="position:absolute;left:295px;top:297px;width:7px;height:5px;background:rgb(235,235,235);"></div>
<div style="position:absolute;left:302px;top:297px;width:7px;height:5px;background:rgb(239,239,239);"></div>
<div style="position:absolute;left:309px;top:297px;width:7px;height:5px;background:rgb(239,239,239);"></div>
<div style="position:absolute;left:316px;top:297px;width:7px;height:5px;background:rgb(236,236,236);"></div>
<div style="position:absolute;left:323px;top:297px;width:7px;height:5px;background:rgb(234,234,234);"></div>
<div style="position:absolute;left:330px;top:297px;width:7px;height:5px;background:rgb(232,232,232);"></div>
<div style="position:absolute;left:337px;top:297px;width:7px;height:5px;background:rgb(230,230,230);"></div>
<div style="position:absolute;left:344px;top:297px;width:7px;height:5px;background:rgb(232,232,232);"></div>
<div style="position:absolute;left:351px;top:297px;width:7px;height:5px;background:rgb(227,227,227);"></div>
<div style="position:absolute;left:358px;top:297px;width:7px;height:5px;background:rgb(234,234,234);"></div>
<div style="position:absolute;left:365px;top:297px;width:7px;height:5px;background:rgb(240,240,240);"></div>
<div style="position:absolute;left:372px;top:297px;width:7px;height:5px;background:rgb(235,235,235);"></div>
<div style="position:absolute;left:379px;top:297px;width:7px;height:5px;background:rgb(239,239,239);"></div>
<div style="position:absolute;left:386px;top:297px;width:7px;height:5px;background:rgb(234,234,234);"></div>
<div style="position:absolute;left:393px;top:297px;width:7px;height:5px;background:rgb(227,227,227);"></div>
<div style="position:absolute;left:400px;top:297px;width:7px;height:5px;background:rgb(228,228,228);"></div>
<div style="position:absolute;left:211px;top:302px;width:7px;height:7px;background:rgb(212,212,212);"></div>
<div style="position:absolute;left:218px;top:302px;width:7px;height:7px;background:rgb(209,209,209);"></div>
<div style="position:absolute;left:225px;top:302px;width:7px;height:7px;background:rgb(201,201,201);"></div>
<div style="position:absolute;left:232px;top:302px;width:7px;height:7px;background:rgb(206,206,206);"></div>
<div style="position:absolute;left:239px;top:302px;width:7px;height:7px;background:rgb(200,200,200);"></div>
<div style="position:absolute;left:246px;top:302px;width:7px;height:7px;background:rgb(211,211,211);"></div>
<div style="position:absolute;left:253px;top:302px;width:7px;height:7px;background:rgb(209,209,209);"></div>
<div style="position:absolute;left:260px;top:302px;width:7px;height:7px;background:rgb(197,197,197);"></div>
<div style="position:absolute;left:267px;top:302px;width:7px;height:7px;background:rgb(198,198,198);"></div>
<div style="position:absolute;left:274px;top:302px;width:7px;height:7px;background:rgb(213,213,213);"></div>
<div style="position:absolute;left:281px;top:302px;width:7px;height:7px;background:rgb(214,214,214);"></div>
<div style="position:absolute;left:288px;top:302px;width:7px;height:7px;background:rgb(206,206,206);"></div>
<div style="position:absolute;left:295px;top:302px;width:7px;height:7px;background:rgb(206,206,206);"></div>
<div style="position:absolute;left:302px;top:302px;width:7px;height:7px;background:rgb(207,207,207);"></div>
<div style="position:absolute;left:309px;top:302px;width:7px;height:7px;background:rgb(215,215,215);"></div>
<div style="position:absolute;left:316px;top:302px;width:7px;height:7px;background:rgb(211,211,211);"></div>
<div style="position:absolute;left:323px;top:302px;width:7px;height:7px;background:rgb(214,214,214);"></div>
<div style="position:absolute;left:330px;top:302px;width:7px;height:7px;background:rgb(210,210,210);"></div>
<div style="position:absolute;left:337px;top:302px;width:7px;height:7px;background:rgb(198,198,198);"></div>
<div style="position:absolute;left:344px;top:302px;width:7px;height:7px;background:rgb(198,198,198);"></div>
<div style="position:absolute;left:351px;top:302px;width:7px;height:7px;background:rgb(204,204,204);"></div>
<div style="position:absolute;left:358px;top:302px;width:7px;height:7px;background:rgb(211,211,211);"></div>
<div style="position:absolute;left:365px;top:302px;width:7px;height:7px;background:rgb(198,198,198);"></div>
<div style="position:absolute;left:372px;top:302px;width:7px;height:7px;background:rgb(197,197,197);"></div>
<div style="position:absolute;left:379px;top:302px;width:7px;height:7px;background:rgb(205,205,205);"></div>
<div style="position:absolute;left:386px;top:302px;width:7px;height:7px;background:rgb(216,216,216);"></div>
<div style="position:absolute;left:393px;top:302px;width:7px;height:7px;background:rgb(214,214,214);"></div>
<div style="position:absolute;left:400px;top:302px;width:7px;height:7px;background:rgb(210,210,210);"></div>
<div style="position:absolute;left:211px;top:309px;width:7px;height:2px;background:rgb(232,232,232);"></div>
<div style="position:absolute;left:218px;top:309px;width:7px;height:2px;background:rgb(239,239,239);"></div>
<div style="position:absolute;left:225px;top:309px;width:7px;height:2px;background:rgb(234,234,234);"></div>
<div style="position:absolute;left:232px;top:309px;width:7px;height:2px;background:rgb(242,242,242);"></div>
<div style="position:absolute;left:239px;top:309px;width:7px;height:2px;background:rgb(238,238,238);"></div>
<div style="position:absolute;left:246px;top:309px;width:7px;height:2px;background:rgb(233,233,233);"></div>
<div style="position:absolute;left:253px;top:309px;width:7px;height:2px;background:rgb(228,228,228);"></div>
<div style="position:absolute;left:260px;top:309px;width:7px;height:2px;background:rgb(235,235,235);"></div>
<div style="position:absolute;left:267px;top:309px;width:7px;height:2px;background:rgb(233,233,233);"></div>
<div style="position:absolute;left:274px;top:309px;width:7px;height:2px;background:rgb(230,230,230);"></div>
<div style="position:absolute;left:281px;top:309px;width:7px;height:2px;background:rgb(237,237,237);"></div>
<div style="position:absolute;left:288px;top:309px;width:7px;height:2px;background:rgb(229,229,229);"></div>
<div style="position:absolute;left:295px;top:309px;width:7px;height:2px;background:rgb(235,235,235);"></div>
<div style="position:absolute;left:302px;top:309px;width:7px;height:2px;background:rgb(228,228,228);"></div>
<div style="position:absolute;left:309px;top:309px;width:7px;height:2px;background:rgb(231,231,231);"></div>
<div style="position:absolute;left:316px;top:309px;width:7px;height:2px;background:rgb(240,240,240);"></div>
<div style="position:absolute;left:323px;top:309px;width:7px;height:2px;background:rgb(232,232,232);"></div>
<div style="position:absolute;left:330px;top:309px;width:7px;height:2px;background:rgb(230,230,230);"></div>
<div style="position:absolute;left:337px;top:309px;width:7px;height:2px;background:rgb(239,239,239);"></div>
<div style="position:absolute;left:344px;top:309px;width:7px;height:2px;background:rgb(231,231,231);"></div>
<div style="position:absolute;left:351px;top:309px;width:7px;height:2px;background:rgb(234,234,234);"></div>
<div style="position:absolute;left:358px;top:309px;width:7px;height:2px;background:rgb(234,234,234);"></div>
<div style="position:absolute;left:365px;top:309px;width:7px;height:2px;background:rgb(242,242,242);"></div>
<div style="position:absolute;left:372px;top:309px;width:7px;height:2px;background:rgb(241,241,241);"></div>
<div style="position:absolute;left:379px;top:309px;width:7px;height:2px;background:rgb(235,235,235);"></div>
<div style="position:absolute;left:386px;top:309px;width:7px;height:2px;background:rgb(229,229,229);"></div>
<div style="position:absolute;left:393px;top:309px;width:7px;height:2px;background:rgb(230,230,230);"></div>
<div style="position:absolute;left:400px;top:309px;width:7px;height:2px;background:rgb(235,235,235);"></div>
<div style="position:absolute;left:211px;top:347px;width:7px;height:5px;background:rgb(238,238,238);"></div>
<div style="position:absolute;left:218px;top:347px;width:7px;height:5px;background:rgb(240,240,240);"></div>
<div style="position:absolute;left:225px;top:347px;width:7px;height:5px;background:rgb(236,236,236);"></div>
<div style="position:absolute;left:232px;top:347px;width:7px;height:5px;background:rgb(234,234,234);"></div>
<div style="position:absolute;left:239px;top:347px;width:7px;height:5px;background:rgb(245,245,245);"></div>
<div style="position:absolute;left:246px;top:347px;width:7px;height:5px;background:rgb(238,238,238);"></div>
<div style="position:absolute;left:253px;top:347px;width:7px;height:5px;background:rgb(245,245,245);"></div>
<div style="position:absolute;left:260px;top:347px;width:7px;height:5px;background:rgb(240,240,240);"></div>
<div style="position:absolute;left:267px;top:347px;width:7px;height:5px;background:rgb(236,236,236);"></div>
<div style="position:absolute;left:274px;top:347px;width:7px;height:5px;background:rgb(243,243,243);"></div>
<div style="position:absolute;left:281px;top:347px;width:7px;height:5px;background:rgb(238,238,238);"></div>
<div style="position:absolute;left:288px;top:347px;width:7px;height:5px;background:rgb(237,237,237);"></div>
<div style="position:absolute;left:295px;top:347px;width:7px;height:5px;background:rgb(242,242,242);"></div>
<div style="position:absolute;left:302px;top:347px;width:7px;height:5px;background:rgb(238,238,238);"></div>
<div style="position:absolute;left:309px;top:347px;width:7px;height:5px;background:rgb(235,235,235);"></div>
<div style="position:absolute;left:316px;top:347px;width:7px;height:5px;background:rgb(234,234,234);"></div>
<div style="position:absolute;left:323px;top:347px;width:7px;height:5px;background:rgb(233,233,233);"></div>
<div style="position:absolute;left:330px;top:347px;width:7px;height:5px;background:rgb(234,234,234);"></div>
<div style="position:absolute;left:337px;top:347px;width:7px;height:5px;background:rgb(234,234,234);"></div>
<div style="position:absolute;left:211px;top:352px;width:7px;height:7px;background:rgb(203,203,203);"></div>
<div style="position:absolute;left:218px;top:352px;width:7px;height:7px;background:rgb(203,203,203);"></div>
<div style="position:absolute;left:225px;top:352px;width:7px;height:7px;background:rgb(196,196,196);"></div>
<div style="position:absolute;left:232px;top:352px;width:7px;height:7px;background:rgb(211,211,211);"></div>
<div style="position:absolute;left:239px;top:352px;width:7px;height:7px;background:rgb(214,214,214);"></div>
<div style="position:absolute;left:246px;top:352px;width:7px;height:7px;background:rgb(201,201,201);"></div>
<div style="position:absolute;left:253px;top:352px;width:7px;height:7px;background:rgb(204,204,204);"></div>
<div style="position:absolute;left:260px;top:352px;width:7px;height:7px;background:rgb(205,205,205);"></div>
<div style="position:absolute;left:267px;top:352px;width:7px;height:7px;background:rgb(196,196,196);"></div>
<div style="position:absolute;left:274px;top:352px;width:7px;height:7px;background:rgb(200,200,200);"></div>
<div style="position:absolute;left:281px;top:352px;width:7px;height:7px;background:rgb(209,209,209);"></div>
<div style="position:absolute;left:288px;top:352px;width:7px;height:7px;background:rgb(213,213,213);"></div>
<div style="position:absolute;left:295px;top:352px;width:7px;height:7px;background:rgb(207,207,207);"></div>
<div style="position:absolute;left:302px;top:352px;width:7px;height:7px;background:rgb(214,214,214);"></div>
<div style="position:absolute;left:309px;top:352px;width:7px;height:7px;background:rgb(206,206,206);"></div>
<div style="position:absolute;left:316px;top:352px;width:7px;height:7px;background:rgb(200,200,200);"></div>
<div style="position:absolute;left:323px;top:352px;width:7px;height:7px;background:rgb(212,212,212);"></div>
<div style="position:absolute;left:330px;top:352px;width:7px;height:7px;background:rgb(197,197,197);"></div>
<div style="position:absolute;left:337px;top:352px;width:7px;height:7px;background:rgb(210,210,210);"></div>
<div style="position:absolute;left:211px;top:359px;width:7px;height:3px;background:rgb(240,240,240);"></div>
<div style="position:absolute;left:218px;top:359px;width:7px;height:3px;background:rgb(239,239,239);"></div>
<div style="position:absolute;left:225px;top:359px;width:7px;height:3px;background:rgb(238,238,238);"></div>
<div style="position:absolute;left:232px;top:359px;width:7px;height:3px;background:rgb(239,239,239);"></div>
<div style="position:absolute;left:239px;top:359px;width:7px;height:3px;background:rgb(236,236,236);"></div>
<div style="position:absolute;left:246px;top:359px;width:7px;height:3px;background:rgb(238,238,238);"></div>
<div style="position:absolute;left:253px;top:359px;width:7px;height:3px;background:rgb(234,234,234);"></div>
<div style="position:absolute;left:260px;top:359px;width:7px;height:3px;background:rgb(232,232,232);"></div>
<div style="position:absolute;left:267px;top:359px;width:7px;height:3px;background:rgb(232,232,232);"></div>
<div style="position:absolute;left:274px;top:359px;width:7px;height:3px;background:rgb(232,232,232);"></div>
<div style="position:absolute;left:281px;top:359px;width:7px;height:3px;background:rgb(232,232,232);"></div>
<div style="position:absolute;left:288px;top:359px;width:7px;height:3px;background:rgb(227,227,227);"></div>
<div style="position:absolute;left:295px;top:359px;width:7px;height:3px;background:rgb(233,233,233);"></div>
<div style="position:absolute;left:302px;top:359px;width:7px;height:3px;background:rgb(236,236,236);"></div>
<div style="position:absolute;left:309px;top:359px;width:7px;height:3px;background:rgb(232,232,232);"></div>
<div style="position:absolute;left:316px;top:359px;width:7px;height:3px;background:rgb(226,226,226);"></div>
<div style="position:absolute;left:323px;top:359px;width:7px;height:3px;background:rgb(229,229,229);"></div>
<div style="position:absolute;left:330px;top:359px;width:7px;height:3px;background:rgb(227,227,227);"></div>
<div style="position:absolute;left:337px;top:359px;width:7px;height:3px;background:rgb(229,229,229);"></div>
<div style="position:absolute;left:211px;top:377px;width:7px;height:5px;background:rgb(219,219,219);"></div>
<div style="position:absolute;left:218px;top:377px;width:7px;height:5px;background:rgb(210,210,210);"></div>
<div style="position:absolute;left:225px;top:377px;width:7px;height:5px;background:rgb(208,208,208);"></div>
<div style="position:absolute;left:232px;top:377px;width:7px;height:5px;background:rgb(215,215,215);"></div>
<div style="position:absolute;left:239px;top:377px;width:7px;height:5px;background:rgb(224,224,224);"></div>
<div style="position:absolute;left:246px;top:377px;width:7px;height:5px;background:rgb(206,206,206);"></div>
<div style="position:absolute;left:253px;top:377px;width:7px;height:5px;background:rgb(208,208,208);"></div>
<div style="position:absolute;left:260px;top:377px;width:7px;height:5px;background:rgb(205,205,205);"></div>
<div style="position:absolute;left:267px;top:377px;width:7px;height:5px;background:rgb(223,223,223);"></div>
<div style="position:absolute;left:274px;top:377px;width:7px;height:5px;background:rgb(209,209,209);"></div>
<div style="position:absolute;left:211px;top:382px;width:7px;height:5px;background:rgb(212,212,212);"></div>
<div style="position:absolute;left:218px;top:382px;width:7px;height:5px;background:rgb(198,198,198);"></div>
<div style="position:absolute;left:225px;top:382px;width:7px;height:5px;background:rgb(225,225,225);"></div>
<div style="position:absolute;left:232px;top:382px;width:7px;height:5px;background:rgb(206,206,206);"></div>
<div style="position:absolute;left:239px;top:382px;width:7px;height:5px;background:rgb(214,214,214);"></div>
<div style="position:absolute;left:246px;top:382px;width:7px;height:5px;background:rgb(195,195,195);"></div>
<div style="position:absolute;left:253px;top:382px;width:7px;height:5px;background:rgb(197,197,197);"></div>
<div style="position:absolute;left:260px;top:382px;width:7px;height:5px;background:rgb(222,222,222);"></div>
<div style="position:absolute;left:267px;top:382px;width:7px;height:5px;background:rgb(201,201,201);"></div>
<div style="position:absolute;left:274px;top:382px;width:7px;height:5px;background:rgb(214,214,214);"></div>
<div style="position:absolute;left:295px;top:377px;width:7px;height:5px;background:rgb(217,217,217);"></div>
<div style="position:absolute;left:302px;top:377px;width:7px;height:5px;background:rgb(209,209,209);"></div>
<div style="position:absolute;left:309px;top:377px;width:7px;height:5px;background:rgb(225,225,225);"></div>
<div style="position:absolute;left:316px;top:377px;width:7px;height:5px;background:rgb(213,213,213);"></div>
<div style="position:absolute;left:323px;top:377px;width:7px;height:5px;background:rgb(216,216,216);"></div>
<div style="position:absolute;left:330px;top:377px;width:7px;height:5px;background:rgb(224,224,224);"></div>
<div style="position:absolute;left:337px;top:377px;width:7px;height:5px;background:rgb(216,216,216);"></div>
<div style="position:absolute;left:344px;top:377px;width:7px;height:5px;background:rgb(220,220,220);"></div>
<div style="position:absolute;left:351px;top:377px;width:7px;height:5px;background:rgb(208,208,208);"></div>
<div style="position:absolute;left:358px;top:377px;width:7px;height:5px;background:rgb(208,208,208);"></div>
<div style="position:absolute;left:365px;top:377px;width:7px;height:5px;background:rgb(220,220,220);"></div>
<div style="position:absolute;left:372px;top:377px;width:7px;height:5px;background:rgb(219,219,219);"></div>
<div style="position:absolute;left:295px;top:382px;width:7px;height:5px;background:rgb(220,220,220);"></div>
<div style="position:absolute;left:302px;top:382px;width:7px;height:5px;background:rgb(220,220,220);"></div>
<div style="position:absolute;left:309px;top:382px;width:7px;height:5px;background:rgb(209,209,209);"></div>
<div style="position:absolute;left:316px;top:382px;width:7px;height:5px;background:rgb(195,195,195);"></div>
<div style="position:absolute;left:323px;top:382px;width:7px;height:5px;background:rgb(199,199,199);"></div>
<div style="position:absolute;left:330px;top:382px;width:7px;height:5px;background:rgb(196,196,196);"></div>
<div style="position:absolute;left:337px;top:382px;width:7px;height:5px;background:rgb(211,211,211);"></div>
<div style="position:absolute;left:344px;top:382px;width:7px;height:5px;background:rgb(206,206,206);"></div>
<div style="position:absolute;left:351px;top:382px;width:7px;height:5px;background:rgb(220,220,220);"></div>
<div style="position:absolute;left:358px;top:382px;width:7px;height:5px;background:rgb(200,200,200);"></div>
<div style="position:absolute;left:365px;top:382px;width:7px;height:5px;background:rgb(191,191,191);"></div>
<div style="position:absolute;left:372px;top:382px;width:7px;height:5px;background:rgb(203,203,203);"></div>
<div style="position:absolute;left:282px;top:387.5px;width:1.5px;height:1.5px;background:#555;"></div>
<svg style="position:absolute;left:0;top:0" width="1235" height="100"><rect x="965" y="15" width="79" height="45" fill="#e4e4e4"/><rect x="965" y="15" width="79" height="1.3" fill="#000"/><polygon points="965,46.4 984,46.4 985,44.8 986,46.2 989,45.8 990,45 991,46.4 994,46.4 995,44.6 997,47.4 999,48 1000,47.2 1002,48 1004,47.9 1037,47.9 1039,45.8 1041,47.5 1044,46.4 1044,60 965,60" fill="#f0e0a0"/><polyline points="965,46.4 984,46.4 985,44.8 986,46.2 989,45.8 990,45 991,46.4 994,46.4 995,44.6 997,47.4 999,48 1000,47.2 1002,48 1004,47.9 1037,47.9 1039,45.8 1041,47.5 1044,46.4" fill="none" stroke="#d0a878" stroke-width="1"/><polygon points="965,51.4 984,51.4 985,50.4 989,50.2 990,49.4 991,51 994,50.6 995,50.2 996,52 997,55.5 1003,55.5 1004,54.2 1009,54 1010,53.4 1037,53.4 1039,52.4 1042,53.2 1043,54.6 1044,53.4 1044,60 965,60" fill="#f8a868"/><polyline points="965,51.4 984,51.4 985,50.4 989,50.2 990,49.4 991,51 994,50.6 995,50.2 996,52 997,55.5 1003,55.5 1004,54.2 1009,54 1010,53.4 1037,53.4 1039,52.4 1042,53.2 1043,54.6 1044,53.4" fill="none" stroke="#e89000" stroke-width="1.2"/><polygon points="965,56.2 984,56.2 985,55.4 986,56 988,55.2 989,56 991,55.4 993,56.4 995,55.3 997,57 1010,57 1011,56 1012,57 1037,57 1039,55.5 1042,56 1044,55.6 1044,60 965,60" fill="#ff1000"/><rect x="965" y="58.2" width="79" height="1.6" fill="#2a9ee8"/><defs><linearGradient id="cpug" x1="0" y1="1" x2="0" y2="0"><stop offset="0" stop-color="#e83a00"/><stop offset="1" stop-color="#fbb890"/></linearGradient></defs><polygon points="1145.4,59.6 1146.5,52.5 1147.8,50 1148.8,42.3 1150,51.5 1151,50 1151.9,42.3 1153,59.6 1154.5,59.6 1156.9,49.6 1158,59.6 1159,58.6 1167,58.6 1167.5,59.6 1171.5,59.6 1172,58.4 1173.5,58.4 1174,59.6 1177,59.6 1177.2,58.6 1181,58.6 1181.2,59.6 1192,59.6 1192.2,58.6 1193.5,58.6 1194,59.6 1196,59.6 1196.2,58.6 1197.5,58.6 1198,59.6 1200,59.6 1201,50 1202.3,41.5 1203.5,46 1204.5,47 1205.5,54 1206.2,59.6" fill="url(#cpug)"/></svg>
</body></html>
